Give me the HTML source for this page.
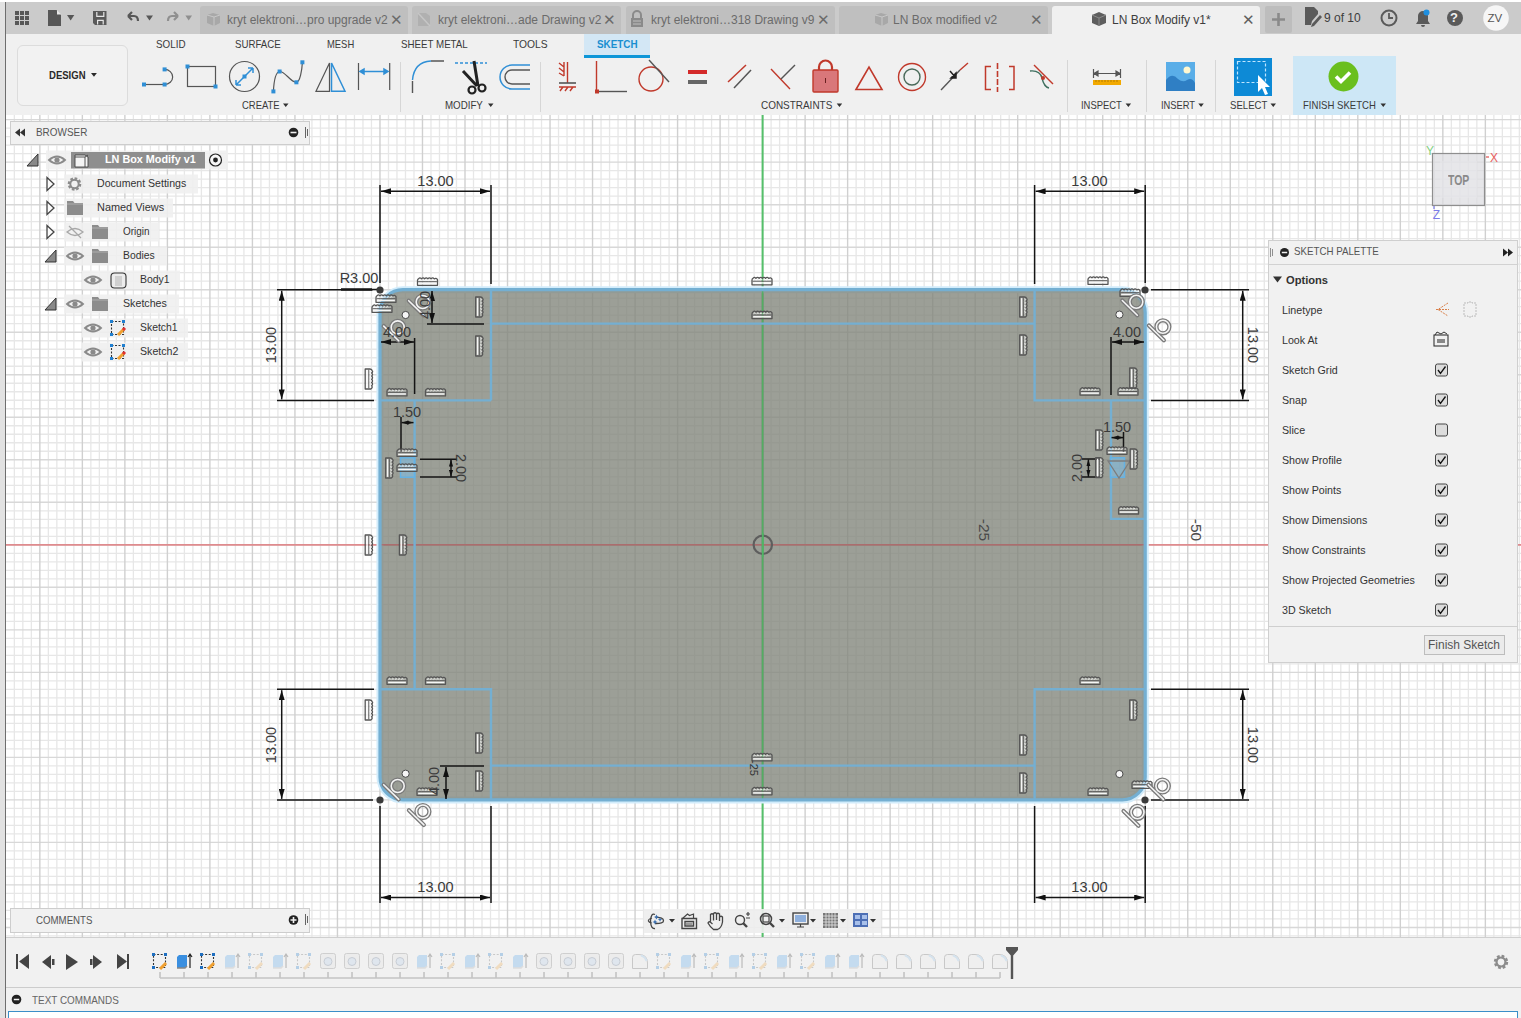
<!DOCTYPE html><html><head><meta charset="utf-8"><style>
*{margin:0;padding:0;box-sizing:border-box}
html,body{width:1521px;height:1018px;overflow:hidden;background:#f0f0f0;font-family:"Liberation Sans",sans-serif;color:#333}
.a{position:absolute}
.t{position:absolute;white-space:nowrap;line-height:1}
</style></head><body>
<svg class="a" style="left:0;top:0" width="1521" height="1018" viewBox="0 0 1521 1018">
<rect x="6" y="115" width="1515" height="822" fill="#ffffff"/>
<path d="M14.34 115V937M22.84 115V937M31.34 115V937M48.35 115V937M56.85 115V937M65.35 115V937M73.86 115V937M90.86 115V937M99.37 115V937M107.87 115V937M116.37 115V937M133.38 115V937M141.88 115V937M150.38 115V937M158.89 115V937M175.89 115V937M184.4 115V937M192.9 115V937M201.4 115V937M218.41 115V937M226.91 115V937M235.41 115V937M243.92 115V937M260.92 115V937M269.43 115V937M277.93 115V937M286.43 115V937M303.44 115V937M311.94 115V937M320.44 115V937M328.95 115V937M345.95 115V937M354.46 115V937M362.96 115V937M371.46 115V937M388.47 115V937M396.97 115V937M405.47 115V937M413.98 115V937M430.98 115V937M439.49 115V937M447.99 115V937M456.49 115V937M473.5 115V937M482 115V937M490.5 115V937M499.01 115V937M516.01 115V937M524.52 115V937M533.02 115V937M541.52 115V937M558.53 115V937M567.03 115V937M575.53 115V937M584.04 115V937M601.04 115V937M609.55 115V937M618.05 115V937M626.55 115V937M643.56 115V937M652.06 115V937M660.56 115V937M669.07 115V937M686.07 115V937M694.58 115V937M703.08 115V937M711.58 115V937M728.59 115V937M737.09 115V937M745.59 115V937M754.1 115V937M771.1 115V937M779.61 115V937M788.11 115V937M796.61 115V937M813.62 115V937M822.12 115V937M830.62 115V937M839.13 115V937M856.13 115V937M864.64 115V937M873.14 115V937M881.64 115V937M898.65 115V937M907.15 115V937M915.65 115V937M924.16 115V937M941.16 115V937M949.67 115V937M958.17 115V937M966.67 115V937M983.68 115V937M992.18 115V937M1000.68 115V937M1009.19 115V937M1026.19 115V937M1034.7 115V937M1043.2 115V937M1051.7 115V937M1068.71 115V937M1077.21 115V937M1085.71 115V937M1094.22 115V937M1111.22 115V937M1119.73 115V937M1128.23 115V937M1136.73 115V937M1153.74 115V937M1162.24 115V937M1170.74 115V937M1179.25 115V937M1196.25 115V937M1204.76 115V937M1213.26 115V937M1221.76 115V937M1238.77 115V937M1247.27 115V937M1255.77 115V937M1264.28 115V937M1281.28 115V937M1289.79 115V937M1298.29 115V937M1306.79 115V937M1323.8 115V937M1332.3 115V937M1340.8 115V937M1349.31 115V937M1366.31 115V937M1374.82 115V937M1383.32 115V937M1391.82 115V937M1408.83 115V937M1417.33 115V937M1425.83 115V937M1434.34 115V937M1451.34 115V937M1459.85 115V937M1468.35 115V937M1476.85 115V937M1493.86 115V937M1502.36 115V937M1510.86 115V937M1519.37 115V937M6 128.15H1521M6 136.66H1521M6 145.16H1521M6 153.66H1521M6 170.67H1521M6 179.17H1521M6 187.67H1521M6 196.18H1521M6 213.18H1521M6 221.69H1521M6 230.19H1521M6 238.69H1521M6 255.7H1521M6 264.2H1521M6 272.7H1521M6 281.21H1521M6 298.21H1521M6 306.72H1521M6 315.22H1521M6 323.72H1521M6 340.73H1521M6 349.23H1521M6 357.73H1521M6 366.24H1521M6 383.24H1521M6 391.75H1521M6 400.25H1521M6 408.75H1521M6 425.76H1521M6 434.26H1521M6 442.76H1521M6 451.27H1521M6 468.27H1521M6 476.78H1521M6 485.28H1521M6 493.78H1521M6 510.79H1521M6 519.29H1521M6 527.79H1521M6 536.3H1521M6 553.3H1521M6 561.81H1521M6 570.31H1521M6 578.81H1521M6 595.82H1521M6 604.32H1521M6 612.82H1521M6 621.33H1521M6 638.33H1521M6 646.84H1521M6 655.34H1521M6 663.84H1521M6 680.85H1521M6 689.35H1521M6 697.85H1521M6 706.36H1521M6 723.36H1521M6 731.87H1521M6 740.37H1521M6 748.87H1521M6 765.88H1521M6 774.38H1521M6 782.88H1521M6 791.39H1521M6 808.39H1521M6 816.9H1521M6 825.4H1521M6 833.9H1521M6 850.91H1521M6 859.41H1521M6 867.91H1521M6 876.42H1521M6 893.42H1521M6 901.93H1521M6 910.43H1521M6 918.93H1521M6 935.94H1521" stroke="#e7e7e7" stroke-width="1.3" fill="none"/>
<path d="M6 119.65H1521M6 162.16H1521M6 204.68H1521M6 247.19H1521M6 289.71H1521M6 332.22H1521M6 374.74H1521M6 417.25H1521M6 459.77H1521M6 502.28H1521M6 544.8H1521M6 587.31H1521M6 629.83H1521M6 672.34H1521M6 714.86H1521M6 757.38H1521M6 799.89H1521M6 842.4H1521M6 884.92H1521M6 927.43H1521" stroke="#d8d8d8" stroke-width="1.4" fill="none"/>
<path d="M39.85 115V937M82.36 115V937M124.88 115V937M167.39 115V937M209.9 115V937M252.42 115V937M294.94 115V937M337.45 115V937M379.97 115V937M422.48 115V937M465 115V937M507.51 115V937M550.03 115V937M592.54 115V937M635.06 115V937M677.57 115V937M720.09 115V937M762.6 115V937M805.12 115V937M847.63 115V937M890.14 115V937M932.66 115V937M975.17 115V937M1017.69 115V937M1060.2 115V937M1102.72 115V937M1145.24 115V937M1187.75 115V937M1230.27 115V937M1272.78 115V937M1315.3 115V937M1357.81 115V937M1400.33 115V937M1442.84 115V937M1485.36 115V937" stroke="#d0d0d0" stroke-width="1.4" fill="none"/>
<path d="M6 544.8H1521" stroke="#df8b8e" stroke-width="1.7" fill="none"/>
<path d="M762.6 115V937" stroke="#55c06a" stroke-width="2" fill="none"/>
<rect x="379.97" y="289.71" width="765.27" height="510.18" rx="23" fill="none" stroke="#d2ecfb" stroke-width="7"/>
<rect x="379.97" y="289.71" width="765.27" height="510.18" rx="23" fill="rgb(128,132,122)" fill-opacity="0.78"/>
<path d="M379.97 544.8H1145.24" stroke="#b0666a" stroke-width="1.6" fill="none" opacity="0.8"/>
<path d="M762.6 289.71V799.89" stroke="#50b060" stroke-width="1.6" fill="none" opacity="0.9"/>
<defs><marker id="ar" viewBox="0 0 10 6" refX="10" refY="3" markerWidth="10" markerHeight="6" markerUnits="userSpaceOnUse" orient="auto-start-reverse"><path d="M0 0L10 3L0 6z" fill="#111"/></marker><marker id="ars" viewBox="0 0 10 6" refX="10" refY="3" markerWidth="7" markerHeight="5" markerUnits="userSpaceOnUse" orient="auto-start-reverse"><path d="M0 0L10 3L0 6z" fill="#111"/></marker></defs><path d="M491.0 289.7V400.4M380.0 400.4H491.0M491.0 323.6H1034.6M1034.6 289.7V400.4H1145.2M414.6 400.4V689.2M380.0 689.2H491.0V799.9M491.0 765.6H1034.6M1034.6 799.9V689.2H1145.2M1111 400.4V518.9H1145.2" stroke="#74afd2" stroke-width="2.4" fill="none"/><rect x="380.0" y="289.7" width="765.2" height="510.2" rx="23" fill="none" stroke="#74afd2" stroke-width="3.2"/><rect x="400.5" y="457.8" width="14" height="19.5" fill="#7ec0ea" fill-opacity="0.55" stroke="#64b2e4" stroke-width="1.5"/><rect x="1110.5" y="457.8" width="14" height="19.5" fill="#7ec0ea" fill-opacity="0.55" stroke="#64b2e4" stroke-width="1.5"/><path d="M1108 461L1130 461L1119 478z" fill="none" stroke="#7d7d7d" stroke-width="1.3"/><path d="M380.0 185V283M491.0 185V284M1034.6 185V284M1145.2 185V283M380.0 806V903M491.0 806V903M1034.6 806V903M1145.2 806V903M277 289.7H373M277 400.4H374M277 689.2H374M277 799.9H373M1151 289.7H1249M1151 400.4H1249M1151 689.2H1249M1151 799.9H1249M341 289.5H378M414.6 338V394M427 324H484M401 417V452M420 459.3H457M420 477H457M1111 337V395M1123.5 432V452M1082 459H1100M1082 477H1100M440 766H484" stroke="#151515" stroke-width="1.5" fill="none"/><path d="M341 289.5H372" stroke="#151515" stroke-width="2.4" fill="none"/><path d="M381.0 191.3H490.0" stroke="#151515" stroke-width="1.5" fill="none" marker-start="url(#ar)" marker-end="url(#ar)"/><path d="M1035.6 191.3H1144.2" stroke="#151515" stroke-width="1.5" fill="none" marker-start="url(#ar)" marker-end="url(#ar)"/><path d="M381.0 897.5H490.0" stroke="#151515" stroke-width="1.5" fill="none" marker-start="url(#ar)" marker-end="url(#ar)"/><path d="M1035.6 897.5H1144.2" stroke="#151515" stroke-width="1.5" fill="none" marker-start="url(#ar)" marker-end="url(#ar)"/><path d="M281.7 290.7V399.4" stroke="#151515" stroke-width="1.5" fill="none" marker-start="url(#ar)" marker-end="url(#ar)"/><path d="M281.7 690.2V798.9" stroke="#151515" stroke-width="1.5" fill="none" marker-start="url(#ar)" marker-end="url(#ar)"/><path d="M1242.7 290.7V399.4" stroke="#151515" stroke-width="1.5" fill="none" marker-start="url(#ar)" marker-end="url(#ar)"/><path d="M1242.7 690.2V798.9" stroke="#151515" stroke-width="1.5" fill="none" marker-start="url(#ar)" marker-end="url(#ar)"/><path d="M381 342H414" stroke="#151515" stroke-width="1.5" fill="none" marker-start="url(#ar)" marker-end="url(#ar)"/><path d="M432 291V323" stroke="#151515" stroke-width="1.5" fill="none" marker-start="url(#ar)" marker-end="url(#ar)"/><path d="M1112 342H1144" stroke="#151515" stroke-width="1.5" fill="none" marker-start="url(#ar)" marker-end="url(#ar)"/><path d="M446 767V799" stroke="#151515" stroke-width="1.5" fill="none" marker-start="url(#ar)" marker-end="url(#ar)"/><path d="M401.5 422.6H413.5" stroke="#151515" stroke-width="1.5" fill="none" marker-start="url(#ars)" marker-end="url(#ars)"/><path d="M451 459.6V476.8" stroke="#151515" stroke-width="1.5" fill="none" marker-start="url(#ars)" marker-end="url(#ars)"/><path d="M1111.5 437.6H1123.5" stroke="#151515" stroke-width="1.5" fill="none" marker-start="url(#ars)" marker-end="url(#ars)"/><path d="M1088.4 459.4V476.8" stroke="#151515" stroke-width="1.5" fill="none" marker-start="url(#ars)" marker-end="url(#ars)"/><g transform="translate(416.5 276.0)"><path d="M1 9.3V4.6Q1 3 2.2 2.6Q3.6 1 4.9 2.9Q6.6 1 8.1 2.9Q9.8 1 11.3 2.9Q13 1 14.5 2.9Q16.2 1 17.7 2.9Q19.6 1.4 21 3.6V9.3Z" fill="#ffffff" fill-opacity="0.22" stroke="#555" stroke-width="1.3" stroke-linejoin="round"/><path d="M2.2 7.4H19.8" stroke="#f6f6f6" stroke-width="1.3"/><path d="M1.6 5.7H20.4" stroke="#555" stroke-width="1"/><path d="M2.6 4.6q1-1.4 2-0.6M5.8 4.6q1-1.4 2-0.6M9 4.6q1-1.4 2-0.6M12.2 4.6q1-1.4 2-0.6M15.4 4.6q1-1.4 2-0.6" stroke="#eeeeee" stroke-width="0.9" fill="none"/></g><g transform="translate(751.0 275.5)"><path d="M1 9.3V4.6Q1 3 2.2 2.6Q3.6 1 4.9 2.9Q6.6 1 8.1 2.9Q9.8 1 11.3 2.9Q13 1 14.5 2.9Q16.2 1 17.7 2.9Q19.6 1.4 21 3.6V9.3Z" fill="#ffffff" fill-opacity="0.22" stroke="#555" stroke-width="1.3" stroke-linejoin="round"/><path d="M2.2 7.4H19.8" stroke="#f6f6f6" stroke-width="1.3"/><path d="M1.6 5.7H20.4" stroke="#555" stroke-width="1"/><path d="M2.6 4.6q1-1.4 2-0.6M5.8 4.6q1-1.4 2-0.6M9 4.6q1-1.4 2-0.6M12.2 4.6q1-1.4 2-0.6M15.4 4.6q1-1.4 2-0.6" stroke="#eeeeee" stroke-width="0.9" fill="none"/></g><g transform="translate(1087.0 275.0)"><path d="M1 9.3V4.6Q1 3 2.2 2.6Q3.6 1 4.9 2.9Q6.6 1 8.1 2.9Q9.8 1 11.3 2.9Q13 1 14.5 2.9Q16.2 1 17.7 2.9Q19.6 1.4 21 3.6V9.3Z" fill="#ffffff" fill-opacity="0.22" stroke="#555" stroke-width="1.3" stroke-linejoin="round"/><path d="M2.2 7.4H19.8" stroke="#f6f6f6" stroke-width="1.3"/><path d="M1.6 5.7H20.4" stroke="#555" stroke-width="1"/><path d="M2.6 4.6q1-1.4 2-0.6M5.8 4.6q1-1.4 2-0.6M9 4.6q1-1.4 2-0.6M12.2 4.6q1-1.4 2-0.6M15.4 4.6q1-1.4 2-0.6" stroke="#eeeeee" stroke-width="0.9" fill="none"/></g><g transform="translate(751.0 309.3)"><path d="M1 9.3V4.6Q1 3 2.2 2.6Q3.6 1 4.9 2.9Q6.6 1 8.1 2.9Q9.8 1 11.3 2.9Q13 1 14.5 2.9Q16.2 1 17.7 2.9Q19.6 1.4 21 3.6V9.3Z" fill="#ffffff" fill-opacity="0.22" stroke="#555" stroke-width="1.3" stroke-linejoin="round"/><path d="M2.2 7.4H19.8" stroke="#f6f6f6" stroke-width="1.3"/><path d="M1.6 5.7H20.4" stroke="#555" stroke-width="1"/><path d="M2.6 4.6q1-1.4 2-0.6M5.8 4.6q1-1.4 2-0.6M9 4.6q1-1.4 2-0.6M12.2 4.6q1-1.4 2-0.6M15.4 4.6q1-1.4 2-0.6" stroke="#eeeeee" stroke-width="0.9" fill="none"/></g><g transform="translate(386.0 386.6)"><path d="M1 9.3V4.6Q1 3 2.2 2.6Q3.6 1 4.9 2.9Q6.6 1 8.1 2.9Q9.8 1 11.3 2.9Q13 1 14.5 2.9Q16.2 1 17.7 2.9Q19.6 1.4 21 3.6V9.3Z" fill="#ffffff" fill-opacity="0.22" stroke="#555" stroke-width="1.3" stroke-linejoin="round"/><path d="M2.2 7.4H19.8" stroke="#f6f6f6" stroke-width="1.3"/><path d="M1.6 5.7H20.4" stroke="#555" stroke-width="1"/><path d="M2.6 4.6q1-1.4 2-0.6M5.8 4.6q1-1.4 2-0.6M9 4.6q1-1.4 2-0.6M12.2 4.6q1-1.4 2-0.6M15.4 4.6q1-1.4 2-0.6" stroke="#eeeeee" stroke-width="0.9" fill="none"/></g><g transform="translate(424.5 386.6)"><path d="M1 9.3V4.6Q1 3 2.2 2.6Q3.6 1 4.9 2.9Q6.6 1 8.1 2.9Q9.8 1 11.3 2.9Q13 1 14.5 2.9Q16.2 1 17.7 2.9Q19.6 1.4 21 3.6V9.3Z" fill="#ffffff" fill-opacity="0.22" stroke="#555" stroke-width="1.3" stroke-linejoin="round"/><path d="M2.2 7.4H19.8" stroke="#f6f6f6" stroke-width="1.3"/><path d="M1.6 5.7H20.4" stroke="#555" stroke-width="1"/><path d="M2.6 4.6q1-1.4 2-0.6M5.8 4.6q1-1.4 2-0.6M9 4.6q1-1.4 2-0.6M12.2 4.6q1-1.4 2-0.6M15.4 4.6q1-1.4 2-0.6" stroke="#eeeeee" stroke-width="0.9" fill="none"/></g><g transform="translate(1079.0 385.8)"><path d="M1 9.3V4.6Q1 3 2.2 2.6Q3.6 1 4.9 2.9Q6.6 1 8.1 2.9Q9.8 1 11.3 2.9Q13 1 14.5 2.9Q16.2 1 17.7 2.9Q19.6 1.4 21 3.6V9.3Z" fill="#ffffff" fill-opacity="0.22" stroke="#555" stroke-width="1.3" stroke-linejoin="round"/><path d="M2.2 7.4H19.8" stroke="#f6f6f6" stroke-width="1.3"/><path d="M1.6 5.7H20.4" stroke="#555" stroke-width="1"/><path d="M2.6 4.6q1-1.4 2-0.6M5.8 4.6q1-1.4 2-0.6M9 4.6q1-1.4 2-0.6M12.2 4.6q1-1.4 2-0.6M15.4 4.6q1-1.4 2-0.6" stroke="#eeeeee" stroke-width="0.9" fill="none"/></g><g transform="translate(1117.0 385.8)"><path d="M1 9.3V4.6Q1 3 2.2 2.6Q3.6 1 4.9 2.9Q6.6 1 8.1 2.9Q9.8 1 11.3 2.9Q13 1 14.5 2.9Q16.2 1 17.7 2.9Q19.6 1.4 21 3.6V9.3Z" fill="#ffffff" fill-opacity="0.22" stroke="#555" stroke-width="1.3" stroke-linejoin="round"/><path d="M2.2 7.4H19.8" stroke="#f6f6f6" stroke-width="1.3"/><path d="M1.6 5.7H20.4" stroke="#555" stroke-width="1"/><path d="M2.6 4.6q1-1.4 2-0.6M5.8 4.6q1-1.4 2-0.6M9 4.6q1-1.4 2-0.6M12.2 4.6q1-1.4 2-0.6M15.4 4.6q1-1.4 2-0.6" stroke="#eeeeee" stroke-width="0.9" fill="none"/></g><g transform="translate(386.0 675.0)"><path d="M1 9.3V4.6Q1 3 2.2 2.6Q3.6 1 4.9 2.9Q6.6 1 8.1 2.9Q9.8 1 11.3 2.9Q13 1 14.5 2.9Q16.2 1 17.7 2.9Q19.6 1.4 21 3.6V9.3Z" fill="#ffffff" fill-opacity="0.22" stroke="#555" stroke-width="1.3" stroke-linejoin="round"/><path d="M2.2 7.4H19.8" stroke="#f6f6f6" stroke-width="1.3"/><path d="M1.6 5.7H20.4" stroke="#555" stroke-width="1"/><path d="M2.6 4.6q1-1.4 2-0.6M5.8 4.6q1-1.4 2-0.6M9 4.6q1-1.4 2-0.6M12.2 4.6q1-1.4 2-0.6M15.4 4.6q1-1.4 2-0.6" stroke="#eeeeee" stroke-width="0.9" fill="none"/></g><g transform="translate(424.5 675.0)"><path d="M1 9.3V4.6Q1 3 2.2 2.6Q3.6 1 4.9 2.9Q6.6 1 8.1 2.9Q9.8 1 11.3 2.9Q13 1 14.5 2.9Q16.2 1 17.7 2.9Q19.6 1.4 21 3.6V9.3Z" fill="#ffffff" fill-opacity="0.22" stroke="#555" stroke-width="1.3" stroke-linejoin="round"/><path d="M2.2 7.4H19.8" stroke="#f6f6f6" stroke-width="1.3"/><path d="M1.6 5.7H20.4" stroke="#555" stroke-width="1"/><path d="M2.6 4.6q1-1.4 2-0.6M5.8 4.6q1-1.4 2-0.6M9 4.6q1-1.4 2-0.6M12.2 4.6q1-1.4 2-0.6M15.4 4.6q1-1.4 2-0.6" stroke="#eeeeee" stroke-width="0.9" fill="none"/></g><g transform="translate(1079.0 675.0)"><path d="M1 9.3V4.6Q1 3 2.2 2.6Q3.6 1 4.9 2.9Q6.6 1 8.1 2.9Q9.8 1 11.3 2.9Q13 1 14.5 2.9Q16.2 1 17.7 2.9Q19.6 1.4 21 3.6V9.3Z" fill="#ffffff" fill-opacity="0.22" stroke="#555" stroke-width="1.3" stroke-linejoin="round"/><path d="M2.2 7.4H19.8" stroke="#f6f6f6" stroke-width="1.3"/><path d="M1.6 5.7H20.4" stroke="#555" stroke-width="1"/><path d="M2.6 4.6q1-1.4 2-0.6M5.8 4.6q1-1.4 2-0.6M9 4.6q1-1.4 2-0.6M12.2 4.6q1-1.4 2-0.6M15.4 4.6q1-1.4 2-0.6" stroke="#eeeeee" stroke-width="0.9" fill="none"/></g><g transform="translate(751.0 751.5)"><path d="M1 9.3V4.6Q1 3 2.2 2.6Q3.6 1 4.9 2.9Q6.6 1 8.1 2.9Q9.8 1 11.3 2.9Q13 1 14.5 2.9Q16.2 1 17.7 2.9Q19.6 1.4 21 3.6V9.3Z" fill="#ffffff" fill-opacity="0.22" stroke="#555" stroke-width="1.3" stroke-linejoin="round"/><path d="M2.2 7.4H19.8" stroke="#f6f6f6" stroke-width="1.3"/><path d="M1.6 5.7H20.4" stroke="#555" stroke-width="1"/><path d="M2.6 4.6q1-1.4 2-0.6M5.8 4.6q1-1.4 2-0.6M9 4.6q1-1.4 2-0.6M12.2 4.6q1-1.4 2-0.6M15.4 4.6q1-1.4 2-0.6" stroke="#eeeeee" stroke-width="0.9" fill="none"/></g><g transform="translate(751.0 785.5)"><path d="M1 9.3V4.6Q1 3 2.2 2.6Q3.6 1 4.9 2.9Q6.6 1 8.1 2.9Q9.8 1 11.3 2.9Q13 1 14.5 2.9Q16.2 1 17.7 2.9Q19.6 1.4 21 3.6V9.3Z" fill="#ffffff" fill-opacity="0.22" stroke="#555" stroke-width="1.3" stroke-linejoin="round"/><path d="M2.2 7.4H19.8" stroke="#f6f6f6" stroke-width="1.3"/><path d="M1.6 5.7H20.4" stroke="#555" stroke-width="1"/><path d="M2.6 4.6q1-1.4 2-0.6M5.8 4.6q1-1.4 2-0.6M9 4.6q1-1.4 2-0.6M12.2 4.6q1-1.4 2-0.6M15.4 4.6q1-1.4 2-0.6" stroke="#eeeeee" stroke-width="0.9" fill="none"/></g><g transform="translate(1087.0 786.0)"><path d="M1 9.3V4.6Q1 3 2.2 2.6Q3.6 1 4.9 2.9Q6.6 1 8.1 2.9Q9.8 1 11.3 2.9Q13 1 14.5 2.9Q16.2 1 17.7 2.9Q19.6 1.4 21 3.6V9.3Z" fill="#ffffff" fill-opacity="0.22" stroke="#555" stroke-width="1.3" stroke-linejoin="round"/><path d="M2.2 7.4H19.8" stroke="#f6f6f6" stroke-width="1.3"/><path d="M1.6 5.7H20.4" stroke="#555" stroke-width="1"/><path d="M2.6 4.6q1-1.4 2-0.6M5.8 4.6q1-1.4 2-0.6M9 4.6q1-1.4 2-0.6M12.2 4.6q1-1.4 2-0.6M15.4 4.6q1-1.4 2-0.6" stroke="#eeeeee" stroke-width="0.9" fill="none"/></g><g transform="translate(375.0 293.0)"><path d="M1 9.3V4.6Q1 3 2.2 2.6Q3.6 1 4.9 2.9Q6.6 1 8.1 2.9Q9.8 1 11.3 2.9Q13 1 14.5 2.9Q16.2 1 17.7 2.9Q19.6 1.4 21 3.6V9.3Z" fill="#ffffff" fill-opacity="0.22" stroke="#555" stroke-width="1.3" stroke-linejoin="round"/><path d="M2.2 7.4H19.8" stroke="#f6f6f6" stroke-width="1.3"/><path d="M1.6 5.7H20.4" stroke="#555" stroke-width="1"/><path d="M2.6 4.6q1-1.4 2-0.6M5.8 4.6q1-1.4 2-0.6M9 4.6q1-1.4 2-0.6M12.2 4.6q1-1.4 2-0.6M15.4 4.6q1-1.4 2-0.6" stroke="#eeeeee" stroke-width="0.9" fill="none"/></g><g transform="translate(371.0 303.0)"><path d="M1 9.3V4.6Q1 3 2.2 2.6Q3.6 1 4.9 2.9Q6.6 1 8.1 2.9Q9.8 1 11.3 2.9Q13 1 14.5 2.9Q16.2 1 17.7 2.9Q19.6 1.4 21 3.6V9.3Z" fill="#ffffff" fill-opacity="0.22" stroke="#555" stroke-width="1.3" stroke-linejoin="round"/><path d="M2.2 7.4H19.8" stroke="#f6f6f6" stroke-width="1.3"/><path d="M1.6 5.7H20.4" stroke="#555" stroke-width="1"/><path d="M2.6 4.6q1-1.4 2-0.6M5.8 4.6q1-1.4 2-0.6M9 4.6q1-1.4 2-0.6M12.2 4.6q1-1.4 2-0.6M15.4 4.6q1-1.4 2-0.6" stroke="#eeeeee" stroke-width="0.9" fill="none"/></g><g transform="translate(396.0 447.0)"><path d="M1 9.3V4.6Q1 3 2.2 2.6Q3.6 1 4.9 2.9Q6.6 1 8.1 2.9Q9.8 1 11.3 2.9Q13 1 14.5 2.9Q16.2 1 17.7 2.9Q19.6 1.4 21 3.6V9.3Z" fill="#ffffff" fill-opacity="0.22" stroke="#555" stroke-width="1.3" stroke-linejoin="round"/><path d="M2.2 7.4H19.8" stroke="#f6f6f6" stroke-width="1.3"/><path d="M1.6 5.7H20.4" stroke="#555" stroke-width="1"/><path d="M2.6 4.6q1-1.4 2-0.6M5.8 4.6q1-1.4 2-0.6M9 4.6q1-1.4 2-0.6M12.2 4.6q1-1.4 2-0.6M15.4 4.6q1-1.4 2-0.6" stroke="#eeeeee" stroke-width="0.9" fill="none"/></g><g transform="translate(1106.0 445.0)"><path d="M1 9.3V4.6Q1 3 2.2 2.6Q3.6 1 4.9 2.9Q6.6 1 8.1 2.9Q9.8 1 11.3 2.9Q13 1 14.5 2.9Q16.2 1 17.7 2.9Q19.6 1.4 21 3.6V9.3Z" fill="#ffffff" fill-opacity="0.22" stroke="#555" stroke-width="1.3" stroke-linejoin="round"/><path d="M2.2 7.4H19.8" stroke="#f6f6f6" stroke-width="1.3"/><path d="M1.6 5.7H20.4" stroke="#555" stroke-width="1"/><path d="M2.6 4.6q1-1.4 2-0.6M5.8 4.6q1-1.4 2-0.6M9 4.6q1-1.4 2-0.6M12.2 4.6q1-1.4 2-0.6M15.4 4.6q1-1.4 2-0.6" stroke="#eeeeee" stroke-width="0.9" fill="none"/></g><g transform="translate(1117.6 504.7)"><path d="M1 9.3V4.6Q1 3 2.2 2.6Q3.6 1 4.9 2.9Q6.6 1 8.1 2.9Q9.8 1 11.3 2.9Q13 1 14.5 2.9Q16.2 1 17.7 2.9Q19.6 1.4 21 3.6V9.3Z" fill="#ffffff" fill-opacity="0.22" stroke="#555" stroke-width="1.3" stroke-linejoin="round"/><path d="M2.2 7.4H19.8" stroke="#f6f6f6" stroke-width="1.3"/><path d="M1.6 5.7H20.4" stroke="#555" stroke-width="1"/><path d="M2.6 4.6q1-1.4 2-0.6M5.8 4.6q1-1.4 2-0.6M9 4.6q1-1.4 2-0.6M12.2 4.6q1-1.4 2-0.6M15.4 4.6q1-1.4 2-0.6" stroke="#eeeeee" stroke-width="0.9" fill="none"/></g><g transform="translate(396.0 462.0)"><path d="M1 9.3V4.6Q1 3 2.2 2.6Q3.6 1 4.9 2.9Q6.6 1 8.1 2.9Q9.8 1 11.3 2.9Q13 1 14.5 2.9Q16.2 1 17.7 2.9Q19.6 1.4 21 3.6V9.3Z" fill="#ffffff" fill-opacity="0.22" stroke="#555" stroke-width="1.3" stroke-linejoin="round"/><path d="M2.2 7.4H19.8" stroke="#f6f6f6" stroke-width="1.3"/><path d="M1.6 5.7H20.4" stroke="#555" stroke-width="1"/><path d="M2.6 4.6q1-1.4 2-0.6M5.8 4.6q1-1.4 2-0.6M9 4.6q1-1.4 2-0.6M12.2 4.6q1-1.4 2-0.6M15.4 4.6q1-1.4 2-0.6" stroke="#eeeeee" stroke-width="0.9" fill="none"/></g><g transform="translate(1131.0 779.0)"><path d="M1 9.3V4.6Q1 3 2.2 2.6Q3.6 1 4.9 2.9Q6.6 1 8.1 2.9Q9.8 1 11.3 2.9Q13 1 14.5 2.9Q16.2 1 17.7 2.9Q19.6 1.4 21 3.6V9.3Z" fill="#ffffff" fill-opacity="0.22" stroke="#555" stroke-width="1.3" stroke-linejoin="round"/><path d="M2.2 7.4H19.8" stroke="#f6f6f6" stroke-width="1.3"/><path d="M1.6 5.7H20.4" stroke="#555" stroke-width="1"/><path d="M2.6 4.6q1-1.4 2-0.6M5.8 4.6q1-1.4 2-0.6M9 4.6q1-1.4 2-0.6M12.2 4.6q1-1.4 2-0.6M15.4 4.6q1-1.4 2-0.6" stroke="#eeeeee" stroke-width="0.9" fill="none"/></g><g transform="translate(1119.0 287.0)"><path d="M1 9.3V4.6Q1 3 2.2 2.6Q3.6 1 4.9 2.9Q6.6 1 8.1 2.9Q9.8 1 11.3 2.9Q13 1 14.5 2.9Q16.2 1 17.7 2.9Q19.6 1.4 21 3.6V9.3Z" fill="#ffffff" fill-opacity="0.22" stroke="#555" stroke-width="1.3" stroke-linejoin="round"/><path d="M2.2 7.4H19.8" stroke="#f6f6f6" stroke-width="1.3"/><path d="M1.6 5.7H20.4" stroke="#555" stroke-width="1"/><path d="M2.6 4.6q1-1.4 2-0.6M5.8 4.6q1-1.4 2-0.6M9 4.6q1-1.4 2-0.6M12.2 4.6q1-1.4 2-0.6M15.4 4.6q1-1.4 2-0.6" stroke="#eeeeee" stroke-width="0.9" fill="none"/></g><g transform="translate(416.0 786.0)"><path d="M1 9.3V4.6Q1 3 2.2 2.6Q3.6 1 4.9 2.9Q6.6 1 8.1 2.9Q9.8 1 11.3 2.9Q13 1 14.5 2.9Q16.2 1 17.7 2.9Q19.6 1.4 21 3.6V9.3Z" fill="#ffffff" fill-opacity="0.22" stroke="#555" stroke-width="1.3" stroke-linejoin="round"/><path d="M2.2 7.4H19.8" stroke="#f6f6f6" stroke-width="1.3"/><path d="M1.6 5.7H20.4" stroke="#555" stroke-width="1"/><path d="M2.6 4.6q1-1.4 2-0.6M5.8 4.6q1-1.4 2-0.6M9 4.6q1-1.4 2-0.6M12.2 4.6q1-1.4 2-0.6M15.4 4.6q1-1.4 2-0.6" stroke="#eeeeee" stroke-width="0.9" fill="none"/></g><g transform="translate(485.0 296.0) rotate(90)"><path d="M1 9.3V4.6Q1 3 2.2 2.6Q3.6 1 4.9 2.9Q6.6 1 8.1 2.9Q9.8 1 11.3 2.9Q13 1 14.5 2.9Q16.2 1 17.7 2.9Q19.6 1.4 21 3.6V9.3Z" fill="#ffffff" fill-opacity="0.22" stroke="#555" stroke-width="1.3" stroke-linejoin="round"/><path d="M2.2 7.4H19.8" stroke="#f6f6f6" stroke-width="1.3"/><path d="M1.6 5.7H20.4" stroke="#555" stroke-width="1"/><path d="M2.6 4.6q1-1.4 2-0.6M5.8 4.6q1-1.4 2-0.6M9 4.6q1-1.4 2-0.6M12.2 4.6q1-1.4 2-0.6M15.4 4.6q1-1.4 2-0.6" stroke="#eeeeee" stroke-width="0.9" fill="none"/></g><g transform="translate(485.0 335.0) rotate(90)"><path d="M1 9.3V4.6Q1 3 2.2 2.6Q3.6 1 4.9 2.9Q6.6 1 8.1 2.9Q9.8 1 11.3 2.9Q13 1 14.5 2.9Q16.2 1 17.7 2.9Q19.6 1.4 21 3.6V9.3Z" fill="#ffffff" fill-opacity="0.22" stroke="#555" stroke-width="1.3" stroke-linejoin="round"/><path d="M2.2 7.4H19.8" stroke="#f6f6f6" stroke-width="1.3"/><path d="M1.6 5.7H20.4" stroke="#555" stroke-width="1"/><path d="M2.6 4.6q1-1.4 2-0.6M5.8 4.6q1-1.4 2-0.6M9 4.6q1-1.4 2-0.6M12.2 4.6q1-1.4 2-0.6M15.4 4.6q1-1.4 2-0.6" stroke="#eeeeee" stroke-width="0.9" fill="none"/></g><g transform="translate(1029.0 296.0) rotate(90)"><path d="M1 9.3V4.6Q1 3 2.2 2.6Q3.6 1 4.9 2.9Q6.6 1 8.1 2.9Q9.8 1 11.3 2.9Q13 1 14.5 2.9Q16.2 1 17.7 2.9Q19.6 1.4 21 3.6V9.3Z" fill="#ffffff" fill-opacity="0.22" stroke="#555" stroke-width="1.3" stroke-linejoin="round"/><path d="M2.2 7.4H19.8" stroke="#f6f6f6" stroke-width="1.3"/><path d="M1.6 5.7H20.4" stroke="#555" stroke-width="1"/><path d="M2.6 4.6q1-1.4 2-0.6M5.8 4.6q1-1.4 2-0.6M9 4.6q1-1.4 2-0.6M12.2 4.6q1-1.4 2-0.6M15.4 4.6q1-1.4 2-0.6" stroke="#eeeeee" stroke-width="0.9" fill="none"/></g><g transform="translate(1029.0 334.0) rotate(90)"><path d="M1 9.3V4.6Q1 3 2.2 2.6Q3.6 1 4.9 2.9Q6.6 1 8.1 2.9Q9.8 1 11.3 2.9Q13 1 14.5 2.9Q16.2 1 17.7 2.9Q19.6 1.4 21 3.6V9.3Z" fill="#ffffff" fill-opacity="0.22" stroke="#555" stroke-width="1.3" stroke-linejoin="round"/><path d="M2.2 7.4H19.8" stroke="#f6f6f6" stroke-width="1.3"/><path d="M1.6 5.7H20.4" stroke="#555" stroke-width="1"/><path d="M2.6 4.6q1-1.4 2-0.6M5.8 4.6q1-1.4 2-0.6M9 4.6q1-1.4 2-0.6M12.2 4.6q1-1.4 2-0.6M15.4 4.6q1-1.4 2-0.6" stroke="#eeeeee" stroke-width="0.9" fill="none"/></g><g transform="translate(374.5 368.0) rotate(90)"><path d="M1 9.3V4.6Q1 3 2.2 2.6Q3.6 1 4.9 2.9Q6.6 1 8.1 2.9Q9.8 1 11.3 2.9Q13 1 14.5 2.9Q16.2 1 17.7 2.9Q19.6 1.4 21 3.6V9.3Z" fill="#ffffff" fill-opacity="0.22" stroke="#555" stroke-width="1.3" stroke-linejoin="round"/><path d="M2.2 7.4H19.8" stroke="#f6f6f6" stroke-width="1.3"/><path d="M1.6 5.7H20.4" stroke="#555" stroke-width="1"/><path d="M2.6 4.6q1-1.4 2-0.6M5.8 4.6q1-1.4 2-0.6M9 4.6q1-1.4 2-0.6M12.2 4.6q1-1.4 2-0.6M15.4 4.6q1-1.4 2-0.6" stroke="#eeeeee" stroke-width="0.9" fill="none"/></g><g transform="translate(374.5 534.0) rotate(90)"><path d="M1 9.3V4.6Q1 3 2.2 2.6Q3.6 1 4.9 2.9Q6.6 1 8.1 2.9Q9.8 1 11.3 2.9Q13 1 14.5 2.9Q16.2 1 17.7 2.9Q19.6 1.4 21 3.6V9.3Z" fill="#ffffff" fill-opacity="0.22" stroke="#555" stroke-width="1.3" stroke-linejoin="round"/><path d="M2.2 7.4H19.8" stroke="#f6f6f6" stroke-width="1.3"/><path d="M1.6 5.7H20.4" stroke="#555" stroke-width="1"/><path d="M2.6 4.6q1-1.4 2-0.6M5.8 4.6q1-1.4 2-0.6M9 4.6q1-1.4 2-0.6M12.2 4.6q1-1.4 2-0.6M15.4 4.6q1-1.4 2-0.6" stroke="#eeeeee" stroke-width="0.9" fill="none"/></g><g transform="translate(408.7 534.0) rotate(90)"><path d="M1 9.3V4.6Q1 3 2.2 2.6Q3.6 1 4.9 2.9Q6.6 1 8.1 2.9Q9.8 1 11.3 2.9Q13 1 14.5 2.9Q16.2 1 17.7 2.9Q19.6 1.4 21 3.6V9.3Z" fill="#ffffff" fill-opacity="0.22" stroke="#555" stroke-width="1.3" stroke-linejoin="round"/><path d="M2.2 7.4H19.8" stroke="#f6f6f6" stroke-width="1.3"/><path d="M1.6 5.7H20.4" stroke="#555" stroke-width="1"/><path d="M2.6 4.6q1-1.4 2-0.6M5.8 4.6q1-1.4 2-0.6M9 4.6q1-1.4 2-0.6M12.2 4.6q1-1.4 2-0.6M15.4 4.6q1-1.4 2-0.6" stroke="#eeeeee" stroke-width="0.9" fill="none"/></g><g transform="translate(374.5 699.0) rotate(90)"><path d="M1 9.3V4.6Q1 3 2.2 2.6Q3.6 1 4.9 2.9Q6.6 1 8.1 2.9Q9.8 1 11.3 2.9Q13 1 14.5 2.9Q16.2 1 17.7 2.9Q19.6 1.4 21 3.6V9.3Z" fill="#ffffff" fill-opacity="0.22" stroke="#555" stroke-width="1.3" stroke-linejoin="round"/><path d="M2.2 7.4H19.8" stroke="#f6f6f6" stroke-width="1.3"/><path d="M1.6 5.7H20.4" stroke="#555" stroke-width="1"/><path d="M2.6 4.6q1-1.4 2-0.6M5.8 4.6q1-1.4 2-0.6M9 4.6q1-1.4 2-0.6M12.2 4.6q1-1.4 2-0.6M15.4 4.6q1-1.4 2-0.6" stroke="#eeeeee" stroke-width="0.9" fill="none"/></g><g transform="translate(485.0 732.0) rotate(90)"><path d="M1 9.3V4.6Q1 3 2.2 2.6Q3.6 1 4.9 2.9Q6.6 1 8.1 2.9Q9.8 1 11.3 2.9Q13 1 14.5 2.9Q16.2 1 17.7 2.9Q19.6 1.4 21 3.6V9.3Z" fill="#ffffff" fill-opacity="0.22" stroke="#555" stroke-width="1.3" stroke-linejoin="round"/><path d="M2.2 7.4H19.8" stroke="#f6f6f6" stroke-width="1.3"/><path d="M1.6 5.7H20.4" stroke="#555" stroke-width="1"/><path d="M2.6 4.6q1-1.4 2-0.6M5.8 4.6q1-1.4 2-0.6M9 4.6q1-1.4 2-0.6M12.2 4.6q1-1.4 2-0.6M15.4 4.6q1-1.4 2-0.6" stroke="#eeeeee" stroke-width="0.9" fill="none"/></g><g transform="translate(485.0 770.0) rotate(90)"><path d="M1 9.3V4.6Q1 3 2.2 2.6Q3.6 1 4.9 2.9Q6.6 1 8.1 2.9Q9.8 1 11.3 2.9Q13 1 14.5 2.9Q16.2 1 17.7 2.9Q19.6 1.4 21 3.6V9.3Z" fill="#ffffff" fill-opacity="0.22" stroke="#555" stroke-width="1.3" stroke-linejoin="round"/><path d="M2.2 7.4H19.8" stroke="#f6f6f6" stroke-width="1.3"/><path d="M1.6 5.7H20.4" stroke="#555" stroke-width="1"/><path d="M2.6 4.6q1-1.4 2-0.6M5.8 4.6q1-1.4 2-0.6M9 4.6q1-1.4 2-0.6M12.2 4.6q1-1.4 2-0.6M15.4 4.6q1-1.4 2-0.6" stroke="#eeeeee" stroke-width="0.9" fill="none"/></g><g transform="translate(1029.0 734.0) rotate(90)"><path d="M1 9.3V4.6Q1 3 2.2 2.6Q3.6 1 4.9 2.9Q6.6 1 8.1 2.9Q9.8 1 11.3 2.9Q13 1 14.5 2.9Q16.2 1 17.7 2.9Q19.6 1.4 21 3.6V9.3Z" fill="#ffffff" fill-opacity="0.22" stroke="#555" stroke-width="1.3" stroke-linejoin="round"/><path d="M2.2 7.4H19.8" stroke="#f6f6f6" stroke-width="1.3"/><path d="M1.6 5.7H20.4" stroke="#555" stroke-width="1"/><path d="M2.6 4.6q1-1.4 2-0.6M5.8 4.6q1-1.4 2-0.6M9 4.6q1-1.4 2-0.6M12.2 4.6q1-1.4 2-0.6M15.4 4.6q1-1.4 2-0.6" stroke="#eeeeee" stroke-width="0.9" fill="none"/></g><g transform="translate(1029.0 772.0) rotate(90)"><path d="M1 9.3V4.6Q1 3 2.2 2.6Q3.6 1 4.9 2.9Q6.6 1 8.1 2.9Q9.8 1 11.3 2.9Q13 1 14.5 2.9Q16.2 1 17.7 2.9Q19.6 1.4 21 3.6V9.3Z" fill="#ffffff" fill-opacity="0.22" stroke="#555" stroke-width="1.3" stroke-linejoin="round"/><path d="M2.2 7.4H19.8" stroke="#f6f6f6" stroke-width="1.3"/><path d="M1.6 5.7H20.4" stroke="#555" stroke-width="1"/><path d="M2.6 4.6q1-1.4 2-0.6M5.8 4.6q1-1.4 2-0.6M9 4.6q1-1.4 2-0.6M12.2 4.6q1-1.4 2-0.6M15.4 4.6q1-1.4 2-0.6" stroke="#eeeeee" stroke-width="0.9" fill="none"/></g><g transform="translate(1139.0 699.0) rotate(90)"><path d="M1 9.3V4.6Q1 3 2.2 2.6Q3.6 1 4.9 2.9Q6.6 1 8.1 2.9Q9.8 1 11.3 2.9Q13 1 14.5 2.9Q16.2 1 17.7 2.9Q19.6 1.4 21 3.6V9.3Z" fill="#ffffff" fill-opacity="0.22" stroke="#555" stroke-width="1.3" stroke-linejoin="round"/><path d="M2.2 7.4H19.8" stroke="#f6f6f6" stroke-width="1.3"/><path d="M1.6 5.7H20.4" stroke="#555" stroke-width="1"/><path d="M2.6 4.6q1-1.4 2-0.6M5.8 4.6q1-1.4 2-0.6M9 4.6q1-1.4 2-0.6M12.2 4.6q1-1.4 2-0.6M15.4 4.6q1-1.4 2-0.6" stroke="#eeeeee" stroke-width="0.9" fill="none"/></g><g transform="translate(1139.0 367.0) rotate(90)"><path d="M1 9.3V4.6Q1 3 2.2 2.6Q3.6 1 4.9 2.9Q6.6 1 8.1 2.9Q9.8 1 11.3 2.9Q13 1 14.5 2.9Q16.2 1 17.7 2.9Q19.6 1.4 21 3.6V9.3Z" fill="#ffffff" fill-opacity="0.22" stroke="#555" stroke-width="1.3" stroke-linejoin="round"/><path d="M2.2 7.4H19.8" stroke="#f6f6f6" stroke-width="1.3"/><path d="M1.6 5.7H20.4" stroke="#555" stroke-width="1"/><path d="M2.6 4.6q1-1.4 2-0.6M5.8 4.6q1-1.4 2-0.6M9 4.6q1-1.4 2-0.6M12.2 4.6q1-1.4 2-0.6M15.4 4.6q1-1.4 2-0.6" stroke="#eeeeee" stroke-width="0.9" fill="none"/></g><g transform="translate(1105.0 429.0) rotate(90)"><path d="M1 9.3V4.6Q1 3 2.2 2.6Q3.6 1 4.9 2.9Q6.6 1 8.1 2.9Q9.8 1 11.3 2.9Q13 1 14.5 2.9Q16.2 1 17.7 2.9Q19.6 1.4 21 3.6V9.3Z" fill="#ffffff" fill-opacity="0.22" stroke="#555" stroke-width="1.3" stroke-linejoin="round"/><path d="M2.2 7.4H19.8" stroke="#f6f6f6" stroke-width="1.3"/><path d="M1.6 5.7H20.4" stroke="#555" stroke-width="1"/><path d="M2.6 4.6q1-1.4 2-0.6M5.8 4.6q1-1.4 2-0.6M9 4.6q1-1.4 2-0.6M12.2 4.6q1-1.4 2-0.6M15.4 4.6q1-1.4 2-0.6" stroke="#eeeeee" stroke-width="0.9" fill="none"/></g><g transform="translate(1139.5 448.0) rotate(90)"><path d="M1 9.3V4.6Q1 3 2.2 2.6Q3.6 1 4.9 2.9Q6.6 1 8.1 2.9Q9.8 1 11.3 2.9Q13 1 14.5 2.9Q16.2 1 17.7 2.9Q19.6 1.4 21 3.6V9.3Z" fill="#ffffff" fill-opacity="0.22" stroke="#555" stroke-width="1.3" stroke-linejoin="round"/><path d="M2.2 7.4H19.8" stroke="#f6f6f6" stroke-width="1.3"/><path d="M1.6 5.7H20.4" stroke="#555" stroke-width="1"/><path d="M2.6 4.6q1-1.4 2-0.6M5.8 4.6q1-1.4 2-0.6M9 4.6q1-1.4 2-0.6M12.2 4.6q1-1.4 2-0.6M15.4 4.6q1-1.4 2-0.6" stroke="#eeeeee" stroke-width="0.9" fill="none"/></g><g transform="translate(1105.0 456.6) rotate(90)"><path d="M1 9.3V4.6Q1 3 2.2 2.6Q3.6 1 4.9 2.9Q6.6 1 8.1 2.9Q9.8 1 11.3 2.9Q13 1 14.5 2.9Q16.2 1 17.7 2.9Q19.6 1.4 21 3.6V9.3Z" fill="#ffffff" fill-opacity="0.22" stroke="#555" stroke-width="1.3" stroke-linejoin="round"/><path d="M2.2 7.4H19.8" stroke="#f6f6f6" stroke-width="1.3"/><path d="M1.6 5.7H20.4" stroke="#555" stroke-width="1"/><path d="M2.6 4.6q1-1.4 2-0.6M5.8 4.6q1-1.4 2-0.6M9 4.6q1-1.4 2-0.6M12.2 4.6q1-1.4 2-0.6M15.4 4.6q1-1.4 2-0.6" stroke="#eeeeee" stroke-width="0.9" fill="none"/></g><g transform="translate(395.0 457.0) rotate(90)"><path d="M1 9.3V4.6Q1 3 2.2 2.6Q3.6 1 4.9 2.9Q6.6 1 8.1 2.9Q9.8 1 11.3 2.9Q13 1 14.5 2.9Q16.2 1 17.7 2.9Q19.6 1.4 21 3.6V9.3Z" fill="#ffffff" fill-opacity="0.22" stroke="#555" stroke-width="1.3" stroke-linejoin="round"/><path d="M2.2 7.4H19.8" stroke="#f6f6f6" stroke-width="1.3"/><path d="M1.6 5.7H20.4" stroke="#555" stroke-width="1"/><path d="M2.6 4.6q1-1.4 2-0.6M5.8 4.6q1-1.4 2-0.6M9 4.6q1-1.4 2-0.6M12.2 4.6q1-1.4 2-0.6M15.4 4.6q1-1.4 2-0.6" stroke="#eeeeee" stroke-width="0.9" fill="none"/></g><g transform="translate(422.7 302)"><path d="M-14 -1.3L1 13.4" stroke="#7a7a7a" stroke-width="4.2" stroke-linecap="round"/><circle r="6.5" fill="none" stroke="#7a7a7a" stroke-width="4.2"/><path d="M-14 -1.3L1 13.4" stroke="#f4f4f4" stroke-width="1.6" stroke-linecap="round"/><circle r="6.5" fill="none" stroke="#f4f4f4" stroke-width="1.6"/></g><g transform="translate(397.7 327.4)"><path d="M-14 -1.3L1 13.4" stroke="#7a7a7a" stroke-width="4.2" stroke-linecap="round"/><circle r="6.5" fill="none" stroke="#7a7a7a" stroke-width="4.2"/><path d="M-14 -1.3L1 13.4" stroke="#f4f4f4" stroke-width="1.6" stroke-linecap="round"/><circle r="6.5" fill="none" stroke="#f4f4f4" stroke-width="1.6"/></g><g transform="translate(1136.3 301.8)"><path d="M-14 -1.3L1 13.4" stroke="#7a7a7a" stroke-width="4.2" stroke-linecap="round"/><circle r="6.5" fill="none" stroke="#7a7a7a" stroke-width="4.2"/><path d="M-14 -1.3L1 13.4" stroke="#f4f4f4" stroke-width="1.6" stroke-linecap="round"/><circle r="6.5" fill="none" stroke="#f4f4f4" stroke-width="1.6"/></g><g transform="translate(1162.9 326.8)"><path d="M-14 -1.3L1 13.4" stroke="#7a7a7a" stroke-width="4.2" stroke-linecap="round"/><circle r="6.5" fill="none" stroke="#7a7a7a" stroke-width="4.2"/><path d="M-14 -1.3L1 13.4" stroke="#f4f4f4" stroke-width="1.6" stroke-linecap="round"/><circle r="6.5" fill="none" stroke="#f4f4f4" stroke-width="1.6"/></g><g transform="translate(397.7 786)"><path d="M-14 -1.3L1 13.4" stroke="#7a7a7a" stroke-width="4.2" stroke-linecap="round"/><circle r="6.5" fill="none" stroke="#7a7a7a" stroke-width="4.2"/><path d="M-14 -1.3L1 13.4" stroke="#f4f4f4" stroke-width="1.6" stroke-linecap="round"/><circle r="6.5" fill="none" stroke="#f4f4f4" stroke-width="1.6"/></g><g transform="translate(422.9 811.5)"><path d="M-14 -1.3L1 13.4" stroke="#7a7a7a" stroke-width="4.2" stroke-linecap="round"/><circle r="6.5" fill="none" stroke="#7a7a7a" stroke-width="4.2"/><path d="M-14 -1.3L1 13.4" stroke="#f4f4f4" stroke-width="1.6" stroke-linecap="round"/><circle r="6.5" fill="none" stroke="#f4f4f4" stroke-width="1.6"/></g><g transform="translate(1162.4 786)"><path d="M-14 -1.3L1 13.4" stroke="#7a7a7a" stroke-width="4.2" stroke-linecap="round"/><circle r="6.5" fill="none" stroke="#7a7a7a" stroke-width="4.2"/><path d="M-14 -1.3L1 13.4" stroke="#f4f4f4" stroke-width="1.6" stroke-linecap="round"/><circle r="6.5" fill="none" stroke="#f4f4f4" stroke-width="1.6"/></g><g transform="translate(1137.5 812.3)"><path d="M-14 -1.3L1 13.4" stroke="#7a7a7a" stroke-width="4.2" stroke-linecap="round"/><circle r="6.5" fill="none" stroke="#7a7a7a" stroke-width="4.2"/><path d="M-14 -1.3L1 13.4" stroke="#f4f4f4" stroke-width="1.6" stroke-linecap="round"/><circle r="6.5" fill="none" stroke="#f4f4f4" stroke-width="1.6"/></g><g fill="#3a3a3a"><circle cx="380" cy="290" r="3.6"/><circle cx="1145" cy="290" r="3.6"/><circle cx="380" cy="800" r="3.6"/><circle cx="1145" cy="800" r="3.6"/></g><g fill="#f6f6f6" stroke="#4a4a4a" stroke-width="1"><circle cx="405.6" cy="315" r="3.6"/><circle cx="1119.4" cy="314.6" r="3.6"/><circle cx="405.6" cy="773.7" r="3.6"/><circle cx="1119.4" cy="774" r="3.6"/></g><circle cx="762.8" cy="544.8" r="9.2" fill="none" stroke="#5e5e5e" stroke-width="2.2"/><path d="M762.8 533V557" stroke="#4fb565" stroke-width="1.8"/>
</svg><div class="t" style="left:435.5px;top:181px;font-size:14.5px;color:#3a3a3a;transform:translate(-50%,-50%) rotate(0deg)">13.00</div><div class="t" style="left:1089.5px;top:181px;font-size:14.5px;color:#3a3a3a;transform:translate(-50%,-50%) rotate(0deg)">13.00</div><div class="t" style="left:435.5px;top:887px;font-size:14.5px;color:#3a3a3a;transform:translate(-50%,-50%) rotate(0deg)">13.00</div><div class="t" style="left:1089.5px;top:887px;font-size:14.5px;color:#3a3a3a;transform:translate(-50%,-50%) rotate(0deg)">13.00</div><div class="t" style="left:271px;top:345px;font-size:14.5px;color:#3a3a3a;transform:translate(-50%,-50%) rotate(-90deg)">13.00</div><div class="t" style="left:271px;top:745px;font-size:14.5px;color:#3a3a3a;transform:translate(-50%,-50%) rotate(-90deg)">13.00</div><div class="t" style="left:1253px;top:345px;font-size:14.5px;color:#3a3a3a;transform:translate(-50%,-50%) rotate(90deg)">13.00</div><div class="t" style="left:1253px;top:745px;font-size:14.5px;color:#3a3a3a;transform:translate(-50%,-50%) rotate(90deg)">13.00</div><div class="t" style="left:359px;top:277.5px;font-size:14.5px;color:#3a3a3a;transform:translate(-50%,-50%) rotate(0deg)">R3.00</div><div class="t" style="left:397px;top:331.5px;font-size:14.5px;color:#3a3a3a;transform:translate(-50%,-50%) rotate(0deg)">4.00</div><div class="t" style="left:1127px;top:331.5px;font-size:14.5px;color:#3a3a3a;transform:translate(-50%,-50%) rotate(0deg)">4.00</div><div class="t" style="left:425px;top:305px;font-size:14.5px;color:#3a3a3a;transform:translate(-50%,-50%) rotate(-90deg)">4.00</div><div class="t" style="left:434px;top:781px;font-size:14.5px;color:#3a3a3a;transform:translate(-50%,-50%) rotate(-90deg)">4.00</div><div class="t" style="left:407px;top:412px;font-size:14.5px;color:#3a3a3a;transform:translate(-50%,-50%) rotate(0deg)">1.50</div><div class="t" style="left:1117px;top:427px;font-size:14.5px;color:#3a3a3a;transform:translate(-50%,-50%) rotate(0deg)">1.50</div><div class="t" style="left:461px;top:468px;font-size:14.5px;color:#3a3a3a;transform:translate(-50%,-50%) rotate(90deg)">2.00</div><div class="t" style="left:1077px;top:468px;font-size:14.5px;color:#3a3a3a;transform:translate(-50%,-50%) rotate(-90deg)">2.00</div><div class="t" style="left:984px;top:530px;font-size:15.5px;color:#4a4a4a;transform:translate(-50%,-50%) rotate(90deg)">-25</div><div class="t" style="left:1196.4px;top:530px;font-size:15.5px;color:#4a4a4a;transform:translate(-50%,-50%) rotate(90deg)">-50</div><div class="t" style="left:752.5px;top:768px;font-size:11px;color:#333;transform:translate(-50%,-50%) rotate(90deg)">-25</div><div class="a" style="left:10px;top:121px;width:300px;height:24px;background:#f1f1f1;border:1px solid #cdcdcd"></div><div class="t" style="left:35.5px;top:126.05px;font-size:11.63px;color:#555;transform:scaleX(0.854);transform-origin:0 0;">BROWSER</div><svg class="a" style="left:0;top:0" width="320" height="940" viewBox="0 0 320 940"><path d="M15 132.5l5-4v8zM20 132.5l5-4v8z" fill="#333"/><circle cx="293.5" cy="132.5" r="4.8" fill="#222"/><path d="M290.5 132.5h6" stroke="#f1f1f1" stroke-width="1.6"/><path d="M305.5 127v11M307.5 129v7" stroke="#555" stroke-width="0.9"/><rect x="46" y="150.5" width="182" height="19" fill="#efefef" fill-opacity="0.88"/><rect x="64" y="174.5" width="134" height="19" fill="#efefef" fill-opacity="0.88"/><rect x="64" y="198.5" width="109" height="19" fill="#efefef" fill-opacity="0.88"/><rect x="64" y="222.5" width="95" height="19" fill="#efefef" fill-opacity="0.88"/><rect x="64" y="246.5" width="103" height="19" fill="#efefef" fill-opacity="0.88"/><rect x="82" y="270.5" width="98" height="19" fill="#efefef" fill-opacity="0.88"/><rect x="64" y="294.5" width="115" height="19" fill="#efefef" fill-opacity="0.88"/><rect x="82" y="318.5" width="106" height="19" fill="#efefef" fill-opacity="0.88"/><rect x="82" y="342.5" width="106" height="19" fill="#efefef" fill-opacity="0.88"/><path d="M27 166L38 154V166z" fill="#888" stroke="#333" stroke-width="1"/><path d="M49 160q8-7 16 0q-8 7-16 0z" fill="none" stroke="#8a8a8a" stroke-width="1.8"/><circle cx="57" cy="160" r="2.6" fill="#8a8a8a"/><rect x="71" y="152" width="134" height="16.5" fill="#8e8e8e"/><path d="M75 155h10l3 2v10h-13z" fill="#f4f4f4" stroke="#444" stroke-width="0.9"/><path d="M75 157h10l3-2M85 157v10" stroke="#444" stroke-width="0.9" fill="none"/><circle cx="215.5" cy="160" r="6" fill="#f6f6f6" stroke="#222" stroke-width="1.2"/><circle cx="215.5" cy="160" r="2.4" fill="#222"/><path d="M47 177.5L54 184L47 190.5z" fill="#fafafa" stroke="#444" stroke-width="1.3"/><circle cx="74.5" cy="184" r="5.2" fill="none" stroke="#8c8c8c" stroke-width="3.2" stroke-dasharray="2.4 1.6"/><circle cx="74.5" cy="184" r="4.2" fill="none" stroke="#8c8c8c" stroke-width="2"/><path d="M47 201.5L54 208L47 214.5z" fill="#fafafa" stroke="#444" stroke-width="1.3"/><path d="M67 201h6l1.5 2h8.5v12h-16z" fill="#8c8c8c"/><path d="M67 204h16" stroke="#b8b8b8" stroke-width="0.8"/><path d="M47 225.5L54 232L47 238.5z" fill="#fafafa" stroke="#444" stroke-width="1.3"/><path d="M92 225h6l1.5 2h8.5v12h-16z" fill="#8c8c8c"/><path d="M92 228h16" stroke="#b8b8b8" stroke-width="0.8"/><path d="M67 232q8-7 16 0q-8 7-16 0z" fill="none" stroke="#a8a8a8" stroke-width="1.3"/><path d="M69 226l12 12" stroke="#a8a8a8" stroke-width="1.3"/><path d="M45 262L56 250V262z" fill="#888" stroke="#333" stroke-width="1"/><path d="M67 256q8-7 16 0q-8 7-16 0z" fill="none" stroke="#8a8a8a" stroke-width="1.8"/><circle cx="75" cy="256" r="2.6" fill="#8a8a8a"/><path d="M92 249h6l1.5 2h8.5v12h-16z" fill="#8c8c8c"/><path d="M92 252h16" stroke="#b8b8b8" stroke-width="0.8"/><path d="M85 280q8-7 16 0q-8 7-16 0z" fill="none" stroke="#8a8a8a" stroke-width="1.8"/><circle cx="93" cy="280" r="2.6" fill="#8a8a8a"/><rect x="111" y="273" width="15" height="15" rx="3.5" fill="#ececec" stroke="#333" stroke-width="1.1"/><path d="M115 276h7v10h-7z" fill="#d0d0d0"/><path d="M45 310L56 298V310z" fill="#888" stroke="#333" stroke-width="1"/><path d="M67 304q8-7 16 0q-8 7-16 0z" fill="none" stroke="#8a8a8a" stroke-width="1.8"/><circle cx="75" cy="304" r="2.6" fill="#8a8a8a"/><path d="M92 297h6l1.5 2h8.5v12h-16z" fill="#8c8c8c"/><path d="M92 300h16" stroke="#b8b8b8" stroke-width="0.8"/><path d="M85 328q8-7 16 0q-8 7-16 0z" fill="none" stroke="#8a8a8a" stroke-width="1.8"/><circle cx="93" cy="328" r="2.6" fill="#8a8a8a"/><rect x="111.5" y="321.5" width="12" height="13" fill="none" stroke="#333" stroke-width="1.1" stroke-dasharray="2 1.5"/><g fill="#1f7fd0"><rect x="110" y="320" width="3" height="3"/><rect x="122" y="320" width="3" height="3"/><rect x="110" y="333" width="3" height="3"/></g><path d="M118 335l6-6" stroke="#f0a030" stroke-width="3"/><path d="M123 330l2-2" stroke="#e03030" stroke-width="3"/><path d="M85 352q8-7 16 0q-8 7-16 0z" fill="none" stroke="#8a8a8a" stroke-width="1.8"/><circle cx="93" cy="352" r="2.6" fill="#8a8a8a"/><rect x="111.5" y="345.5" width="12" height="13" fill="none" stroke="#333" stroke-width="1.1" stroke-dasharray="2 1.5"/><g fill="#1f7fd0"><rect x="110" y="344" width="3" height="3"/><rect x="122" y="344" width="3" height="3"/><rect x="110" y="357" width="3" height="3"/></g><path d="M118 359l6-6" stroke="#f0a030" stroke-width="3"/><path d="M123 354l2-2" stroke="#e03030" stroke-width="3"/><rect x="10.5" y="908.5" width="299" height="24" fill="#f1f1f1" stroke="#cdcdcd"/><circle cx="293.5" cy="920" r="4.8" fill="#222"/><path d="M290.5 920h6M293.5 917v6" stroke="#f1f1f1" stroke-width="1.6"/><path d="M305.5 914v11M307.5 916v7" stroke="#555" stroke-width="0.9"/></svg><div class="t" style="left:104.5px;top:154.47px;font-size:11.48px;font-weight:bold;color:#fff;transform:scaleX(0.943);transform-origin:0 0;">LN Box Modify v1</div><div class="t" style="left:97.4px;top:178.37px;font-size:11.48px;color:#333;transform:scaleX(0.921);transform-origin:0 0;">Document Settings</div><div class="t" style="left:97.4px;top:202.37px;font-size:11.48px;color:#333;transform:scaleX(0.952);transform-origin:0 0;">Named Views</div><div class="t" style="left:122.6px;top:226.47px;font-size:11.48px;color:#333;transform:scaleX(0.865);transform-origin:0 0;">Origin</div><div class="t" style="left:122.6px;top:250.37px;font-size:11.48px;color:#333;transform:scaleX(0.903);transform-origin:0 0;">Bodies</div><div class="t" style="left:140.4px;top:274.37px;font-size:11.48px;color:#333;transform:scaleX(0.912);transform-origin:0 0;">Body1</div><div class="t" style="left:122.6px;top:298.37px;font-size:11.48px;color:#333;transform:scaleX(0.930);transform-origin:0 0;">Sketches</div><div class="t" style="left:140.4px;top:322.27px;font-size:11.48px;color:#333;transform:scaleX(0.906);transform-origin:0 0;">Sketch1</div><div class="t" style="left:140.4px;top:346.27px;font-size:11.48px;color:#333;transform:scaleX(0.926);transform-origin:0 0;">Sketch2</div><div class="t" style="left:35.5px;top:914.35px;font-size:11.63px;color:#555;transform:scaleX(0.833);transform-origin:0 0;">COMMENTS</div><div class="a" style="left:644px;top:909px;width:237px;height:24px;background:#eeeeee;opacity:0.92"></div><svg class="a" style="left:640px;top:905px" width="250" height="32" viewBox="640 905 250 32">
<g fill="none" stroke="#444" stroke-width="1.2">
<path d="M655 914.5q-4 -2 -4.5 6.5q0.5 8.5 4.5 7.5" stroke-width="1.3"/><path d="M652 918q-4 1.2 -3.5 3q0.5 1.5 3 1.8M655.5 917.5q8 -0.5 8 3.2q0 3 -8.5 2.8" stroke-width="1.3"/>
<path d="M682 918.5h14.5v10h-14.5z M685 921.5h8.5v4.5h-8.5z" stroke-width="1.4"/><path d="M682.5 918.5l5-4.5l2 1.5l4-1.5v4.5" stroke-width="1.2"/><rect x="686" y="922.5" width="6.5" height="2.5" fill="#999" stroke="none"/>
<path d="M710.5 921.5v-7q1.5-1.5 3 0v6M713.5 920v-6.5q1.5-1.5 3 0v6.5M716.5 920v-6q1.5-1.5 3 0v7M719.5 921v-4q1.5-1.5 3 0v5q-1 6-5 7.5h-4q-3-2-5.5-6.5q0.5-1.5 2-1.2l2.5 2.2" stroke-width="1.3"/>
<circle cx="740" cy="920" r="4.5" stroke-width="1.4"/><path d="M743 923l4 4" stroke-width="2.4"/><path d="M746 914h4M748 912v4M746 918h4"/>
<circle cx="766" cy="919" r="5.5" stroke-width="1.5"/><rect x="763" y="916" width="6" height="6"/><path d="M770 923l4 4" stroke-width="2.4"/>
<rect x="793" y="913" width="15" height="11" stroke-width="1.4"/><path d="M797 927h7M800.5 924v3"/>
</g>
<rect x="795" y="915" width="11" height="7" fill="#8fb0dd"/>
<path d="M669 919h6l-3 3.5zM779 919h6l-3 3.5zM810 919h6l-3 3.5zM840 919h6l-3 3.5zM870 919h6l-3 3.5z" fill="#333"/><g fill="#3a6fb0"><path d="M656.5 914.5l0.8 1.7 1.7 0.8-1.7 0.8-0.8 1.7-0.8-1.7-1.7-0.8 1.7-0.8z"/><path d="M660 917.5l0.7 1.4 1.4 0.7-1.4 0.7-0.7 1.4-0.7-1.4-1.4-0.7 1.4-0.7z"/><path d="M655 919.5l0.8 1.7 1.7 0.8-1.7 0.8-0.8 1.7-0.8-1.7-1.7-0.8 1.7-0.8z"/></g>
<rect x="823" y="913" width="15" height="15" fill="#777"/>
<path d="M826 913v15M829 913v15M832 913v15M835 913v15M823 916h15M823 919h15M823 922h15M823 925h15" stroke="#e6e6e6" stroke-width="0.8"/>
<rect x="853" y="913" width="15" height="14" fill="#4d6fb5"/>
<rect x="855" y="915" width="5" height="4" fill="#a8c0ea"/><rect x="862" y="915" width="5" height="4" fill="#a8c0ea"/><rect x="855" y="921" width="5" height="4" fill="#a8c0ea"/><rect x="862" y="921" width="5" height="4" fill="#a8c0ea"/>
</svg><div class="a" style="left:1268px;top:240px;width:250px;height:423px;background:#f1f1f1;border:1px solid #cfcfcf"></div><div class="a" style="left:1269px;top:264px;width:248px;height:1px;background:#d2d2d2"></div><div class="a" style="left:1269px;top:626px;width:248px;height:1px;background:#cfcfcf"></div><div class="t" style="left:1293.6px;top:246.48px;font-size:11.12px;color:#555;transform:scaleX(0.876);transform-origin:0 0;">SKETCH PALETTE</div><div class="t" style="left:1286.2px;top:274.50px;font-size:11.34px;font-weight:bold;color:#333;transform:scaleX(0.983);transform-origin:0 0;">Options</div><div class="t" style="left:1281.6px;top:304.57px;font-size:11.48px;color:#333;transform:scaleX(0.93);transform-origin:0 0;">Linetype</div><div class="t" style="left:1281.6px;top:334.57px;font-size:11.48px;color:#333;transform:scaleX(0.93);transform-origin:0 0;">Look At</div><div class="t" style="left:1281.6px;top:364.57px;font-size:11.48px;color:#333;transform:scaleX(0.93);transform-origin:0 0;">Sketch Grid</div><div class="t" style="left:1281.6px;top:394.57px;font-size:11.48px;color:#333;transform:scaleX(0.93);transform-origin:0 0;">Snap</div><div class="t" style="left:1281.6px;top:424.57px;font-size:11.48px;color:#333;transform:scaleX(0.93);transform-origin:0 0;">Slice</div><div class="t" style="left:1281.6px;top:454.57px;font-size:11.48px;color:#333;transform:scaleX(0.93);transform-origin:0 0;">Show Profile</div><div class="t" style="left:1281.6px;top:484.57px;font-size:11.48px;color:#333;transform:scaleX(0.93);transform-origin:0 0;">Show Points</div><div class="t" style="left:1281.6px;top:514.57px;font-size:11.48px;color:#333;transform:scaleX(0.93);transform-origin:0 0;">Show Dimensions</div><div class="t" style="left:1281.6px;top:544.57px;font-size:11.48px;color:#333;transform:scaleX(0.93);transform-origin:0 0;">Show Constraints</div><div class="t" style="left:1281.6px;top:574.57px;font-size:11.48px;color:#333;transform:scaleX(0.93);transform-origin:0 0;">Show Projected Geometries</div><div class="t" style="left:1281.6px;top:604.57px;font-size:11.48px;color:#333;transform:scaleX(0.93);transform-origin:0 0;">3D Sketch</div><svg class="a" style="left:1260px;top:235px" width="261" height="430" viewBox="1260 235 261 430"><path d="M1270.5 248v9M1272.5 249v7" stroke="#666" stroke-width="0.7"/><circle cx="1284.5" cy="252.5" r="4.5" fill="#222"/><path d="M1281.8 252.5h5.4" stroke="#f1f1f1" stroke-width="1.5"/><path d="M1503 248.5l5 4-5 4zM1508 248.5l5 4-5 4z" fill="#222"/><path d="M1273 276.5h9l-4.5 6z" fill="#333"/><path d="M1448 303l-10 6.5 10 6.5M1436 309.5h13" stroke="#d9804a" stroke-width="1" fill="none" stroke-dasharray="2 1"/><path d="M1464 303h4v-1h4v1h4v13h-4v1h-4v-1h-4z" stroke="#bbb" stroke-width="1" fill="none" stroke-dasharray="2 1"/><rect x="1434" y="335" width="14" height="11" fill="none" stroke="#333" stroke-width="1.1"/><rect x="1437" y="339" width="8" height="4" fill="#888"/><path d="M1435 335l2-3l4 2l3-2l3 2" stroke="#333" fill="none" stroke-width="1"/><rect x="1435.5" y="364" width="12" height="12" rx="2" fill="#dcdcdc" stroke="#444" stroke-width="1"/><path d="M1438 370l2.5 3.5l5-7" stroke="#111" stroke-width="1.3" fill="none"/><rect x="1435.5" y="394" width="12" height="12" rx="2" fill="#dcdcdc" stroke="#444" stroke-width="1"/><path d="M1438 400l2.5 3.5l5-7" stroke="#111" stroke-width="1.3" fill="none"/><rect x="1435.5" y="424" width="12" height="12" rx="2" fill="#dcdcdc" stroke="#444" stroke-width="1"/><rect x="1435.5" y="454" width="12" height="12" rx="2" fill="#dcdcdc" stroke="#444" stroke-width="1"/><path d="M1438 460l2.5 3.5l5-7" stroke="#111" stroke-width="1.3" fill="none"/><rect x="1435.5" y="484" width="12" height="12" rx="2" fill="#dcdcdc" stroke="#444" stroke-width="1"/><path d="M1438 490l2.5 3.5l5-7" stroke="#111" stroke-width="1.3" fill="none"/><rect x="1435.5" y="514" width="12" height="12" rx="2" fill="#dcdcdc" stroke="#444" stroke-width="1"/><path d="M1438 520l2.5 3.5l5-7" stroke="#111" stroke-width="1.3" fill="none"/><rect x="1435.5" y="544" width="12" height="12" rx="2" fill="#dcdcdc" stroke="#444" stroke-width="1"/><path d="M1438 550l2.5 3.5l5-7" stroke="#111" stroke-width="1.3" fill="none"/><rect x="1435.5" y="574" width="12" height="12" rx="2" fill="#dcdcdc" stroke="#444" stroke-width="1"/><path d="M1438 580l2.5 3.5l5-7" stroke="#111" stroke-width="1.3" fill="none"/><rect x="1435.5" y="604" width="12" height="12" rx="2" fill="#dcdcdc" stroke="#444" stroke-width="1"/><path d="M1438 610l2.5 3.5l5-7" stroke="#111" stroke-width="1.3" fill="none"/></svg><div class="a" style="left:1424px;top:635px;width:81px;height:20px;background:#ebebeb;border:1px solid #bdbdbd"></div><div class="t" style="left:1428px;top:639px;font-size:12px;color:#555">Finish Sketch</div><svg class="a" style="left:1420px;top:140px" width="101" height="90" viewBox="1420 140 101 90">
<rect x="1432.5" y="153.5" width="52" height="52" fill="#dcdce0" fill-opacity="0.72" stroke="#8e8e8e" stroke-width="1.2"/>
<rect x="1440" y="161" width="37" height="37" fill="#e8e8ec" fill-opacity="0.5"/>
<path d="M1486 157h3" stroke="#e05050" stroke-width="1.2"/>
<text x="1494" y="162" font-family="Liberation Sans" font-size="12" fill="#e86060" text-anchor="middle">X</text>
<text x="1430" y="155" font-family="Liberation Sans" font-size="12" fill="#7fd07f" text-anchor="middle">Y</text>
<text x="1436.5" y="219" font-family="Liberation Sans" font-size="12" fill="#7a7ae8" text-anchor="middle">Z</text>
<path d="M1434 206v3" stroke="#7a7ae8" stroke-width="1.2"/>
</svg><div class="t" style="left:1447.9px;top:171.93px;font-size:15.55px;font-weight:bold;color:#8a8a8a;transform:scaleX(0.672);transform-origin:0 0;">TOP</div><div class="a" style="left:6px;top:937px;width:1515px;height:81px;background:#f1f1f1"></div><div class="a" style="left:6px;top:937px;width:1515px;height:1px;background:#cfcfcf"></div><div class="a" style="left:6px;top:986.5px;width:1515px;height:1px;background:#cccccc"></div><div class="a" style="left:8px;top:1011px;width:1510px;height:10px;background:#fff;border:1px solid #3b8ec8"></div><div class="t" style="left:31.5px;top:993.65px;font-size:11.63px;color:#666;transform:scaleX(0.852);transform-origin:0 0;">TEXT COMMANDS</div><svg class="a" style="left:0;top:937px" width="1521" height="81" viewBox="0 937 1521 81"><circle cx="16.5" cy="999.5" r="4.8" fill="#222"/><path d="M13.8 999.5h5.4" stroke="#f1f1f1" stroke-width="1.5"/><g fill="#444"><rect x="16" y="954" width="2" height="15"/><path d="M29 954v15l-10-7.5z"/><path d="M51 955v14l-9-7z"/><rect x="52" y="959" width="2.5" height="6"/><path d="M66 954v16l12-8z"/><rect x="90" y="959" width="2.5" height="6"/><path d="M93 955v14l9-7z"/><path d="M117 954v15l10-7.5z"/><rect x="127" y="954" width="2" height="15"/></g><rect x="153.5" y="954.5" width="12" height="13" fill="none" stroke="#333" stroke-width="1.1" stroke-dasharray="2 1.6"/><g fill="#1f6fc0"><rect x="152" y="953" width="3" height="3"/><rect x="164" y="953" width="3" height="3"/><rect x="152" y="966" width="3" height="3"/></g><path d="M160 969l6-6" stroke="#f0a030" stroke-width="3"/><path d="M177 957l2-2h8v11l-2 2h-8z" fill="#3a8fe0"/><path d="M177 968h8l2-2" fill="none" stroke="#888" stroke-width="1.5"/><path d="M190 968V954M188 957l2-3 2 3" stroke="#222" stroke-width="1.2" fill="none"/><rect x="201.5" y="954.5" width="12" height="13" fill="none" stroke="#333" stroke-width="1.1" stroke-dasharray="2 1.6"/><g fill="#1f6fc0"><rect x="200" y="953" width="3" height="3"/><rect x="212" y="953" width="3" height="3"/><rect x="200" y="966" width="3" height="3"/></g><path d="M208 969l6-6" stroke="#f0a030" stroke-width="3"/><path d="M225 957l2-2h8v11l-2 2h-8z" fill="#c4dbef"/><path d="M225 968h8l2-2" fill="none" stroke="#ddd" stroke-width="1.5"/><path d="M238 968V954M236 957l2-3 2 3" stroke="#bbb" stroke-width="1.2" fill="none"/><rect x="249.5" y="954.5" width="12" height="13" fill="none" stroke="#c8c8c8" stroke-width="1.1" stroke-dasharray="2 1.6"/><g fill="#b5cfe6"><rect x="248" y="953" width="3" height="3"/><rect x="260" y="953" width="3" height="3"/><rect x="248" y="966" width="3" height="3"/></g><path d="M256 969l6-6" stroke="#f0dcc0" stroke-width="3"/><path d="M273 957l2-2h8v11l-2 2h-8z" fill="#c4dbef"/><path d="M273 968h8l2-2" fill="none" stroke="#ddd" stroke-width="1.5"/><path d="M286 968V954M284 957l2-3 2 3" stroke="#bbb" stroke-width="1.2" fill="none"/><rect x="297.5" y="954.5" width="12" height="13" fill="none" stroke="#c8c8c8" stroke-width="1.1" stroke-dasharray="2 1.6"/><g fill="#b5cfe6"><rect x="296" y="953" width="3" height="3"/><rect x="308" y="953" width="3" height="3"/><rect x="296" y="966" width="3" height="3"/></g><path d="M304 969l6-6" stroke="#f0dcc0" stroke-width="3"/><rect x="320.5" y="953.5" width="15" height="15" rx="2" fill="#ececec" stroke="#cfcfcf" stroke-width="1"/><circle cx="328" cy="961.5" r="4" fill="#dfe6ee" stroke="#c8cdd4"/><rect x="344.5" y="953.5" width="15" height="15" rx="2" fill="#ececec" stroke="#cfcfcf" stroke-width="1"/><circle cx="352" cy="961.5" r="4" fill="#dfe6ee" stroke="#c8cdd4"/><rect x="368.5" y="953.5" width="15" height="15" rx="2" fill="#ececec" stroke="#cfcfcf" stroke-width="1"/><circle cx="376" cy="961.5" r="4" fill="#dfe6ee" stroke="#c8cdd4"/><rect x="392.5" y="953.5" width="15" height="15" rx="2" fill="#ececec" stroke="#cfcfcf" stroke-width="1"/><circle cx="400" cy="961.5" r="4" fill="#dfe6ee" stroke="#c8cdd4"/><path d="M417 957l2-2h8v11l-2 2h-8z" fill="#c4dbef"/><path d="M417 968h8l2-2" fill="none" stroke="#ddd" stroke-width="1.5"/><path d="M430 968V954M428 957l2-3 2 3" stroke="#bbb" stroke-width="1.2" fill="none"/><rect x="441.5" y="954.5" width="12" height="13" fill="none" stroke="#c8c8c8" stroke-width="1.1" stroke-dasharray="2 1.6"/><g fill="#b5cfe6"><rect x="440" y="953" width="3" height="3"/><rect x="452" y="953" width="3" height="3"/><rect x="440" y="966" width="3" height="3"/></g><path d="M448 969l6-6" stroke="#f0dcc0" stroke-width="3"/><path d="M465 957l2-2h8v11l-2 2h-8z" fill="#c4dbef"/><path d="M465 968h8l2-2" fill="none" stroke="#ddd" stroke-width="1.5"/><path d="M478 968V954M476 957l2-3 2 3" stroke="#bbb" stroke-width="1.2" fill="none"/><rect x="489.5" y="954.5" width="12" height="13" fill="none" stroke="#c8c8c8" stroke-width="1.1" stroke-dasharray="2 1.6"/><g fill="#b5cfe6"><rect x="488" y="953" width="3" height="3"/><rect x="500" y="953" width="3" height="3"/><rect x="488" y="966" width="3" height="3"/></g><path d="M496 969l6-6" stroke="#f0dcc0" stroke-width="3"/><path d="M513 957l2-2h8v11l-2 2h-8z" fill="#c4dbef"/><path d="M513 968h8l2-2" fill="none" stroke="#ddd" stroke-width="1.5"/><path d="M526 968V954M524 957l2-3 2 3" stroke="#bbb" stroke-width="1.2" fill="none"/><rect x="536.5" y="953.5" width="15" height="15" rx="2" fill="#ececec" stroke="#cfcfcf" stroke-width="1"/><circle cx="544" cy="961.5" r="4" fill="#dfe6ee" stroke="#c8cdd4"/><rect x="560.5" y="953.5" width="15" height="15" rx="2" fill="#ececec" stroke="#cfcfcf" stroke-width="1"/><circle cx="568" cy="961.5" r="4" fill="#dfe6ee" stroke="#c8cdd4"/><rect x="584.5" y="953.5" width="15" height="15" rx="2" fill="#ececec" stroke="#cfcfcf" stroke-width="1"/><circle cx="592" cy="961.5" r="4" fill="#dfe6ee" stroke="#c8cdd4"/><rect x="608.5" y="953.5" width="15" height="15" rx="2" fill="#ececec" stroke="#cfcfcf" stroke-width="1"/><circle cx="616" cy="961.5" r="4" fill="#dfe6ee" stroke="#c8cdd4"/><path d="M632.5 968.5V957.5Q632.5 954.5 635.5 954.5H639Q647.5 954.5 647.5 963V968.5z" fill="#efefef" stroke="#c8c8c8" stroke-width="1"/><path d="M641 955.5Q645.5 957 646.5 961" stroke="#d5e3ee" stroke-width="2" fill="none"/><rect x="657.5" y="954.5" width="12" height="13" fill="none" stroke="#c8c8c8" stroke-width="1.1" stroke-dasharray="2 1.6"/><g fill="#b5cfe6"><rect x="656" y="953" width="3" height="3"/><rect x="668" y="953" width="3" height="3"/><rect x="656" y="966" width="3" height="3"/></g><path d="M664 969l6-6" stroke="#f0dcc0" stroke-width="3"/><path d="M681 957l2-2h8v11l-2 2h-8z" fill="#c4dbef"/><path d="M681 968h8l2-2" fill="none" stroke="#ddd" stroke-width="1.5"/><path d="M694 968V954M692 957l2-3 2 3" stroke="#bbb" stroke-width="1.2" fill="none"/><rect x="705.5" y="954.5" width="12" height="13" fill="none" stroke="#c8c8c8" stroke-width="1.1" stroke-dasharray="2 1.6"/><g fill="#b5cfe6"><rect x="704" y="953" width="3" height="3"/><rect x="716" y="953" width="3" height="3"/><rect x="704" y="966" width="3" height="3"/></g><path d="M712 969l6-6" stroke="#f0dcc0" stroke-width="3"/><path d="M729 957l2-2h8v11l-2 2h-8z" fill="#c4dbef"/><path d="M729 968h8l2-2" fill="none" stroke="#ddd" stroke-width="1.5"/><path d="M742 968V954M740 957l2-3 2 3" stroke="#bbb" stroke-width="1.2" fill="none"/><rect x="753.5" y="954.5" width="12" height="13" fill="none" stroke="#c8c8c8" stroke-width="1.1" stroke-dasharray="2 1.6"/><g fill="#b5cfe6"><rect x="752" y="953" width="3" height="3"/><rect x="764" y="953" width="3" height="3"/><rect x="752" y="966" width="3" height="3"/></g><path d="M760 969l6-6" stroke="#f0dcc0" stroke-width="3"/><path d="M777 957l2-2h8v11l-2 2h-8z" fill="#c4dbef"/><path d="M777 968h8l2-2" fill="none" stroke="#ddd" stroke-width="1.5"/><path d="M790 968V954M788 957l2-3 2 3" stroke="#bbb" stroke-width="1.2" fill="none"/><rect x="801.5" y="954.5" width="12" height="13" fill="none" stroke="#c8c8c8" stroke-width="1.1" stroke-dasharray="2 1.6"/><g fill="#b5cfe6"><rect x="800" y="953" width="3" height="3"/><rect x="812" y="953" width="3" height="3"/><rect x="800" y="966" width="3" height="3"/></g><path d="M808 969l6-6" stroke="#f0dcc0" stroke-width="3"/><path d="M825 957l2-2h8v11l-2 2h-8z" fill="#c4dbef"/><path d="M825 968h8l2-2" fill="none" stroke="#ddd" stroke-width="1.5"/><path d="M838 968V954M836 957l2-3 2 3" stroke="#bbb" stroke-width="1.2" fill="none"/><path d="M849 957l2-2h8v11l-2 2h-8z" fill="#c4dbef"/><path d="M849 968h8l2-2" fill="none" stroke="#ddd" stroke-width="1.5"/><path d="M862 968V954M860 957l2-3 2 3" stroke="#bbb" stroke-width="1.2" fill="none"/><path d="M872.5 968.5V957.5Q872.5 954.5 875.5 954.5H879Q887.5 954.5 887.5 963V968.5z" fill="#efefef" stroke="#c8c8c8" stroke-width="1"/><path d="M881 955.5Q885.5 957 886.5 961" stroke="#d5e3ee" stroke-width="2" fill="none"/><path d="M896.5 968.5V957.5Q896.5 954.5 899.5 954.5H903Q911.5 954.5 911.5 963V968.5z" fill="#efefef" stroke="#c8c8c8" stroke-width="1"/><path d="M905 955.5Q909.5 957 910.5 961" stroke="#d5e3ee" stroke-width="2" fill="none"/><path d="M920.5 968.5V957.5Q920.5 954.5 923.5 954.5H927Q935.5 954.5 935.5 963V968.5z" fill="#efefef" stroke="#c8c8c8" stroke-width="1"/><path d="M929 955.5Q933.5 957 934.5 961" stroke="#d5e3ee" stroke-width="2" fill="none"/><path d="M944.5 968.5V957.5Q944.5 954.5 947.5 954.5H951Q959.5 954.5 959.5 963V968.5z" fill="#efefef" stroke="#c8c8c8" stroke-width="1"/><path d="M953 955.5Q957.5 957 958.5 961" stroke="#d5e3ee" stroke-width="2" fill="none"/><path d="M968.5 968.5V957.5Q968.5 954.5 971.5 954.5H975Q983.5 954.5 983.5 963V968.5z" fill="#efefef" stroke="#c8c8c8" stroke-width="1"/><path d="M977 955.5Q981.5 957 982.5 961" stroke="#d5e3ee" stroke-width="2" fill="none"/><path d="M992.5 968.5V957.5Q992.5 954.5 995.5 954.5H999Q1007.5 954.5 1007.5 963V968.5z" fill="#efefef" stroke="#c8c8c8" stroke-width="1"/><path d="M1001 955.5Q1005.5 957 1006.5 961" stroke="#d5e3ee" stroke-width="2" fill="none"/><path d="M160 972v6M184 972v6M208 972v6M232 972v6M256 972v6M280 972v6M304 972v6M328 972v6M352 972v6M376 972v6M400 972v6M424 972v6M448 972v6M472 972v6M496 972v6M520 972v6M544 972v6M568 972v6M592 972v6M616 972v6M640 972v6M664 972v6M688 972v6M712 972v6M736 972v6M760 972v6M784 972v6M808 972v6M832 972v6M856 972v6M880 972v6M904 972v6M928 972v6M952 972v6M976 972v6M1000 972v6M160 978H1000" stroke="#c4c4c4" stroke-width="1.6" fill="none"/><path d="M1006 947h12v3l-4.8 5.5v23.5h-2.4v-23.5l-4.8-5.5z" fill="#555"/><g transform="translate(1501 962)"><circle r="5.5" fill="none" stroke="#8c8c8c" stroke-width="3.4" stroke-dasharray="2.5 1.8"/><circle r="4.5" fill="none" stroke="#8c8c8c" stroke-width="2.2"/></g></svg><div class="a" style="left:0;top:0;width:1521px;height:2px;background:#ffffff"></div><div class="a" style="left:0;top:2px;width:1521px;height:32px;background:#cbcbcb"></div><svg class="a" style="left:0;top:0" width="200" height="34" viewBox="0 0 200 34">
<g fill="#575757">
<rect x="15" y="11" width="4" height="4"/><rect x="20" y="11" width="4" height="4"/><rect x="25" y="11" width="4" height="4"/>
<rect x="15" y="16" width="4" height="4"/><rect x="20" y="16" width="4" height="4"/><rect x="25" y="16" width="4" height="4"/>
<rect x="15" y="21" width="4" height="4"/><rect x="20" y="21" width="4" height="4"/><rect x="25" y="21" width="4" height="4"/>
<path d="M48 10h8.5l4.5 4.5v11.5h-13z"/><path d="M57 10v4.5h4.5z" fill="#e8e8e8"/><path d="M67 15h7.3l-3.65 5.4z"/>
<path d="M93 11h13.5v14h-11.5l-2-2z" fill="#5a5a5a"/><path d="M96.8 12v4.3h7v-4.3M97.6 24.6v-4.3h5.6v4.3" stroke="#e6e6e6" stroke-width="1.2" fill="none"/>
<path d="M146 15.5h7l-3.5 5z"/>
</g>
<path d="M128 16 l4-4 M128 16 l4 4 M128 16 h6 q4 0 4 5" stroke="#575757" stroke-width="2.2" fill="none"/>
<path d="M178 16 l-4-4 M178 16 l-4 4 M178 16 h-6 q-4 0-4 5" stroke="#8f8f8f" stroke-width="2.2" fill="none"/>
<path d="M185.4 15.5h6.6l-3.3 5z" fill="#8f8f8f"/>
</svg><div class="a" style="left:200px;top:6px;width:208px;height:28px;background:#bfbfbf;border-radius:3px 3px 0 0"></div><div class="t" style="left:227px;top:14px;font-size:12px;color:#6b6b6b">kryt elektroni…pro upgrade v2</div><div class="t" style="left:390px;top:12px;font-size:15px;color:#6b6b6b">✕</div><svg class="a" style="left:205px;top:11px" width="16" height="16" viewBox="0 0 16 16"><path d="M2 4l6-2 7 2v8l-6 3-7-3z" fill="#a8a8a8"/><path d="M2 4l7 2 6-2M9 6v9" stroke="#c8c8c8" stroke-width="1" fill="none"/></svg><div class="a" style="left:412px;top:6px;width:209px;height:28px;background:#bfbfbf;border-radius:3px 3px 0 0"></div><div class="t" style="left:438px;top:14px;font-size:12px;color:#6b6b6b">kryt elektroni…ade Drawing v2</div><div class="t" style="left:603px;top:12px;font-size:15px;color:#6b6b6b">✕</div><svg class="a" style="left:416px;top:11px" width="16" height="16" viewBox="0 0 16 16"><path d="M2 2h8l4 3v10h-12z" fill="#b0b0b0"/><path d="M2 2l12 13" stroke="#c6c6c6" stroke-width="1.5"/></svg><div class="a" style="left:626px;top:6px;width:209px;height:28px;background:#bfbfbf;border-radius:3px 3px 0 0"></div><div class="t" style="left:651px;top:14px;font-size:12px;color:#6b6b6b">kryt elektroni…318 Drawing v9</div><div class="t" style="left:817px;top:12px;font-size:15px;color:#6b6b6b">✕</div><svg class="a" style="left:629px;top:10px" width="16" height="18" viewBox="0 0 16 18"><path d="M4 8V5a4 4 0 0 1 8 0v3" stroke="#8a8a8a" stroke-width="2" fill="none"/><rect x="2" y="8" width="12" height="9" fill="#8a8a8a"/><path d="M4 11h8M4 14h8" stroke="#bfbfbf" stroke-width="1"/></svg><div class="a" style="left:839px;top:6px;width:209px;height:28px;background:#bfbfbf;border-radius:3px 3px 0 0"></div><div class="t" style="left:893px;top:14px;font-size:12px;color:#6b6b6b">LN Box modified v2</div><div class="t" style="left:1030px;top:12px;font-size:15px;color:#6b6b6b">✕</div><svg class="a" style="left:873px;top:11px" width="16" height="16" viewBox="0 0 16 16"><path d="M2 4l6-2 7 2v8l-6 3-7-3z" fill="#a8a8a8"/><path d="M2 4l7 2 6-2M9 6v9" stroke="#c8c8c8" stroke-width="1" fill="none"/></svg><div class="a" style="left:1052px;top:6px;width:208px;height:29px;background:#f0f0f0;border-radius:3px 3px 0 0"></div><svg class="a" style="left:1091px;top:11px" width="16" height="16" viewBox="0 0 16 16"><path d="M1 4l7-3 7 3v8l-7 3-7-3z" fill="#5e5e5e"/><path d="M1 4l7 3 7-3M8 7v8" stroke="#8a8a8a" stroke-width="1" fill="none"/></svg><div class="t" style="left:1112px;top:14px;font-size:12px;color:#3d3d3d">LN Box Modify v1*</div><div class="t" style="left:1242px;top:12px;font-size:15px;color:#606060">✕</div><div class="a" style="left:1265px;top:6px;width:27px;height:27px;background:#bdbdbd;border-radius:2px"></div><svg class="a" style="left:1265px;top:6px" width="27" height="27"><path d="M13.5 7v13M7 13.5h13" stroke="#8a8a8a" stroke-width="2.6"/></svg><svg class="a" style="left:1300px;top:4px" width="221" height="30" viewBox="1300 4 221 30">
<path d="M1305 7h9l4 4v3l-6 7-1 4h-6z" fill="#5a5a5a"/><path d="M1312 24l8-9 2 2-8 9-3 1z" fill="#5a5a5a"/>
<circle cx="1389" cy="18" r="7.5" fill="none" stroke="#5a5a5a" stroke-width="2"/><path d="M1389 13v5h4" stroke="#5a5a5a" stroke-width="1.8" fill="none"/>
<path d="M1416 24h14l-2-3v-5a5 5 0 0 0-10 0v5z M1421 25h4a2 2 0 0 1-4 0z" fill="#5a5a5a"/><circle cx="1426.5" cy="12.5" r="3" fill="#1f8fe0"/>
<circle cx="1455" cy="18" r="8" fill="#5a5a5a"/>
<circle cx="1496" cy="18" r="12.8" fill="#f6f6f6"/>
</svg><div class="t" style="left:1324px;top:12px;font-size:12px;color:#3d3d3d">9 of 10</div><div class="t" style="left:1450px;top:11px;font-size:13px;font-weight:bold;color:#f0f0f0">?</div><div class="t" style="left:1487.5px;top:12.5px;font-size:11.5px;color:#555">ZV</div><div class="a" style="left:6px;top:34px;width:1515px;height:81px;background:#f0f0f0"></div><div class="a" style="left:17px;top:45px;width:111px;height:61px;border:1.6px solid #dcdcdc;border-radius:6px;background:#f2f2f2"></div><div class="t" style="left:48.7px;top:69.04px;font-size:11.70px;font-weight:bold;color:#2a2a2a;transform:scaleX(0.816);transform-origin:0 0;">DESIGN</div><svg class="a" style="left:90.9px;top:73px" width="6" height="4"><path d="M0 0h5.9l-2.95 3.7z" fill="#2a2a2a"/></svg><div class="t" style="left:156.4px;top:39.30px;font-size:11.34px;color:#3a3a3a;transform:scaleX(0.867);transform-origin:0 0;">SOLID</div><div class="t" style="left:234.5px;top:39.30px;font-size:11.34px;color:#3a3a3a;transform:scaleX(0.855);transform-origin:0 0;">SURFACE</div><div class="t" style="left:327.4px;top:39.30px;font-size:11.34px;color:#3a3a3a;transform:scaleX(0.831);transform-origin:0 0;">MESH</div><div class="t" style="left:400.5px;top:39.30px;font-size:11.34px;color:#3a3a3a;transform:scaleX(0.860);transform-origin:0 0;">SHEET METAL</div><div class="t" style="left:513.2px;top:39.30px;font-size:11.34px;color:#3a3a3a;transform:scaleX(0.908);transform-origin:0 0;">TOOLS</div><div class="a" style="left:584px;top:34px;width:66px;height:22px;background:#d3e7f5"></div><div class="a" style="left:584px;top:55px;width:66px;height:3px;background:#0d96d8"></div><div class="t" style="left:597.1px;top:39.30px;font-size:11.34px;font-weight:bold;color:#1a8fd0;transform:scaleX(0.871);transform-origin:0 0;">SKETCH</div><div class="a" style="left:1293px;top:56px;width:103px;height:59px;background:#cde7f6"></div><div class="t" style="left:241.7px;top:100.27px;font-size:11.48px;color:#3a3a3a;transform:scaleX(0.825);transform-origin:0 0;">CREATE</div><div class="t" style="left:445.2px;top:100.27px;font-size:11.48px;color:#3a3a3a;transform:scaleX(0.849);transform-origin:0 0;">MODIFY</div><div class="t" style="left:761.4px;top:100.27px;font-size:11.48px;color:#3a3a3a;transform:scaleX(0.867);transform-origin:0 0;">CONSTRAINTS</div><div class="t" style="left:1081.2px;top:100.27px;font-size:11.48px;color:#3a3a3a;transform:scaleX(0.822);transform-origin:0 0;">INSPECT</div><div class="t" style="left:1160.5px;top:100.27px;font-size:11.48px;color:#3a3a3a;transform:scaleX(0.814);transform-origin:0 0;">INSERT</div><div class="t" style="left:1229.6px;top:100.27px;font-size:11.48px;color:#3a3a3a;transform:scaleX(0.837);transform-origin:0 0;">SELECT</div><div class="t" style="left:1303.4px;top:100.27px;font-size:11.48px;color:#3a3a3a;transform:scaleX(0.835);transform-origin:0 0;">FINISH SKETCH</div><svg class="a" style="left:0;top:0" width="1521" height="115"><path d="M283 103.5h5.5l-2.75 3.5zM488 103.5h5.5l-2.75 3.5zM836.7 103.5h5.5l-2.75 3.5zM1125.6 103.5h5.5l-2.75 3.5zM1198.3 103.5h5.5l-2.75 3.5zM1270.5 103.5h5.5l-2.75 3.5zM1380.5 103.5h5.5l-2.75 3.5z" fill="#333"/></svg><svg class="a" style="left:0;top:0" width="1521" height="115"><path d="M540.5 62V112M1067.5 60V112M1146.5 60V112M1215.5 60V112M400.5 62V112" stroke="#d6d6d6" stroke-width="1"/></svg><svg class="a" style="left:0;top:0" width="1521" height="115" viewBox="0 0 1521 115">
<g fill="none" stroke="#555" stroke-width="1.2">
<path d="M144 84.5H164.6"/><path d="M164.6 69.4A8 7.5 0 0 1 164.6 84.5"/>
<rect x="187.5" y="66.5" width="28" height="20"/>
<circle cx="244.5" cy="76.5" r="15"/>
<path d="M273.4 91.4C274 80 276 72 279.6 71.5C285 71 290 82 296.4 82.3C300 82 302 70 302.4 62.3"/>
<path d="M316 91.3L329.5 63V91.3Z"/>
<path d="M358.5 63V90M389.7 63V90"/>
</g>
<g fill="#2f8fd6">
<rect x="142" y="82.5" width="4" height="4"/><rect x="162.6" y="82.5" width="4" height="4"/><rect x="162.6" y="67.4" width="4" height="4"/>
<rect x="185.5" y="64.5" width="4" height="4"/><rect x="213.5" y="84.5" width="4" height="4"/>
<rect x="242.5" y="74.5" width="4" height="4"/>
<rect x="271.4" y="89.4" width="4" height="4"/><rect x="277.6" y="69.5" width="4" height="4"/><rect x="294.4" y="80.3" width="4" height="4"/><rect x="300.4" y="60.3" width="4" height="4"/>
</g>
<g fill="none" stroke="#2f8fd6" stroke-width="1.5">
<path d="M236 85L253 68M236 85l5 0M236 85l0-5M253 68l-5 0M253 68l0 5"/>
<path d="M331.5 63L345 91.3H331.5Z"/>
<path d="M360 71.5H388M360 71.5l4-2.5v5zM388 71.5l-4-2.5v5z"/>
</g>
</svg><svg class="a" style="left:0;top:0" width="1521" height="115" viewBox="0 0 1521 115">
<path d="M412.5 80Q414 62 431 61" stroke="#2f8fd6" stroke-width="1.4" fill="none"/>
<path d="M412.5 81V93M431 61H444" stroke="#555" stroke-width="1.4" fill="none"/>
<path d="M455 63H487" stroke="#2f8fd6" stroke-width="1.4" stroke-dasharray="3 2" fill="none"/>
<path d="M463 71L477 86M474 61L478 86" stroke="#222" stroke-width="3" fill="none"/>
<circle cx="472" cy="90" r="3.5" stroke="#222" stroke-width="2.2" fill="none"/><circle cx="482" cy="88" r="3.5" stroke="#222" stroke-width="2.2" fill="none"/>
<path d="M530 65H512A12 12 0 0 0 512 89H530" stroke="#2f8fd6" stroke-width="1.5" fill="none"/>
<path d="M530 70H512A7 7 0 0 0 512 84H530" stroke="#555" stroke-width="1.4" fill="none"/>
</g>
</svg><svg class="a" style="left:0;top:0" width="1521" height="115" viewBox="0 0 1521 115">
<g fill="none" stroke-width="1.4">
<path d="M567.5 62V83M564 62V76M559 63l5 4M559 68l5 4M559 73l5 3" stroke="#c0392b"/>
<path d="M559 83H576" stroke="#555" stroke-width="1.6"/><path d="M559 87H576M560 91l3-4M565 91l3-4M570 91l3-4" stroke="#c0392b"/>
<path d="M596.5 61V92" stroke="#c0392b"/><path d="M597 91.5H627" stroke="#555"/>
<circle cx="651" cy="79" r="12" stroke="#c0392b"/><path d="M649 60L669 82" stroke="#555"/>
<path d="M728 82L746 65" stroke="#c0392b" stroke-width="1.5"/><path d="M734 88L751 70" stroke="#555" stroke-width="1.5"/>
<path d="M771 69L790 89" stroke="#c0392b"/><path d="M781 79L795 65" stroke="#555"/>
<path d="M819 70V67a6.5 6.5 0 0 1 13 0v3" stroke="#c0392b" stroke-width="2.2"/>
<path d="M856 89.5L869 67L882 89.5Z" stroke="#c0392b" stroke-width="1.6"/>
<circle cx="912" cy="77" r="13.5" stroke="#c0392b"/><circle cx="912" cy="77" r="8" stroke="#4a6a5a"/>
<path d="M941 90L960 70" stroke="#555"/><path d="M960 70L968 63" stroke="#c0392b"/>
<path d="M991 66.5H985.5V89.5H991M1009 66.5H1014V89.5H1009" stroke="#c0392b" stroke-width="1.5"/>
<path d="M997.5 63V92" stroke="#c0392b" stroke-width="1.6" stroke-dasharray="6 2"/>
<path d="M1030 71Q1040 70 1042 78Q1044 87 1049 88" stroke="#3f6f5f"/><path d="M1034 65L1053 84" stroke="#c0392b"/>
</g>
<path d="M688 70h19v4h-19z" fill="#d42a2a"/><path d="M688 80h19v4h-19z" fill="#666"/>
<rect x="595" y="89.5" width="4" height="4" fill="#c0392b"/>
<rect x="813" y="70" width="25" height="22" rx="1" fill="#d9777a" stroke="#c0392b" stroke-width="1.4"/><path d="M825.5 78v5" stroke="#6a2020" stroke-width="1"/>
<path d="M950 71l6 7M956 78l-5 0l5-5z" stroke="#222" stroke-width="1.5" fill="#222"/>
<circle cx="1043" cy="78" r="2" fill="#c0392b"/>
<circle cx="1343.5" cy="76.5" r="15" fill="#6abf1e"/><path d="M1336 76.5l5 5 9-9" stroke="#fff" stroke-width="3.6" fill="none"/>
</svg><svg class="a" style="left:0;top:0" width="1521" height="115" viewBox="0 0 1521 115">
<path d="M1093 80h28v5h-28z" fill="#f2a900"/><path d="M1096 80v2M1099 80v2M1102 80v2M1105 80v2M1108 80v2M1111 80v2M1114 80v2M1117 80v2" stroke="#b57d00" stroke-width="1"/>
<path d="M1093.5 69V78M1120.5 69V78M1094 73.5H1120M1094 73.5l4-2.5v5zM1120 73.5l-4-2.5v5z" stroke="#555" stroke-width="1.2" fill="#555"/>
<rect x="1166" y="62" width="29" height="29" fill="#5aaee8"/><path d="M1166 91V80Q1172 72 1178 79Q1183 83 1187 80Q1192 77 1195 83V91Z" fill="#2f7fc4"/><circle cx="1187" cy="70" r="3.5" fill="#fff8d0"/>
<rect x="1234" y="58" width="38" height="38" fill="#0d8ad6"/><rect x="1237.5" y="61.5" width="28" height="21" fill="none" stroke="#bfe6ff" stroke-width="1.2" stroke-dasharray="3 2"/>
<path d="M1258 75V92L1262 88L1265 95L1268 94L1265 87L1270 87Z" fill="#fff"/>
</svg><div class="a" style="left:0;top:2px;width:5px;height:1016px;background:#e2e2e2"></div><div class="a" style="left:5px;top:2px;width:1px;height:1016px;background:#6e6e6e"></div>
</body></html>
